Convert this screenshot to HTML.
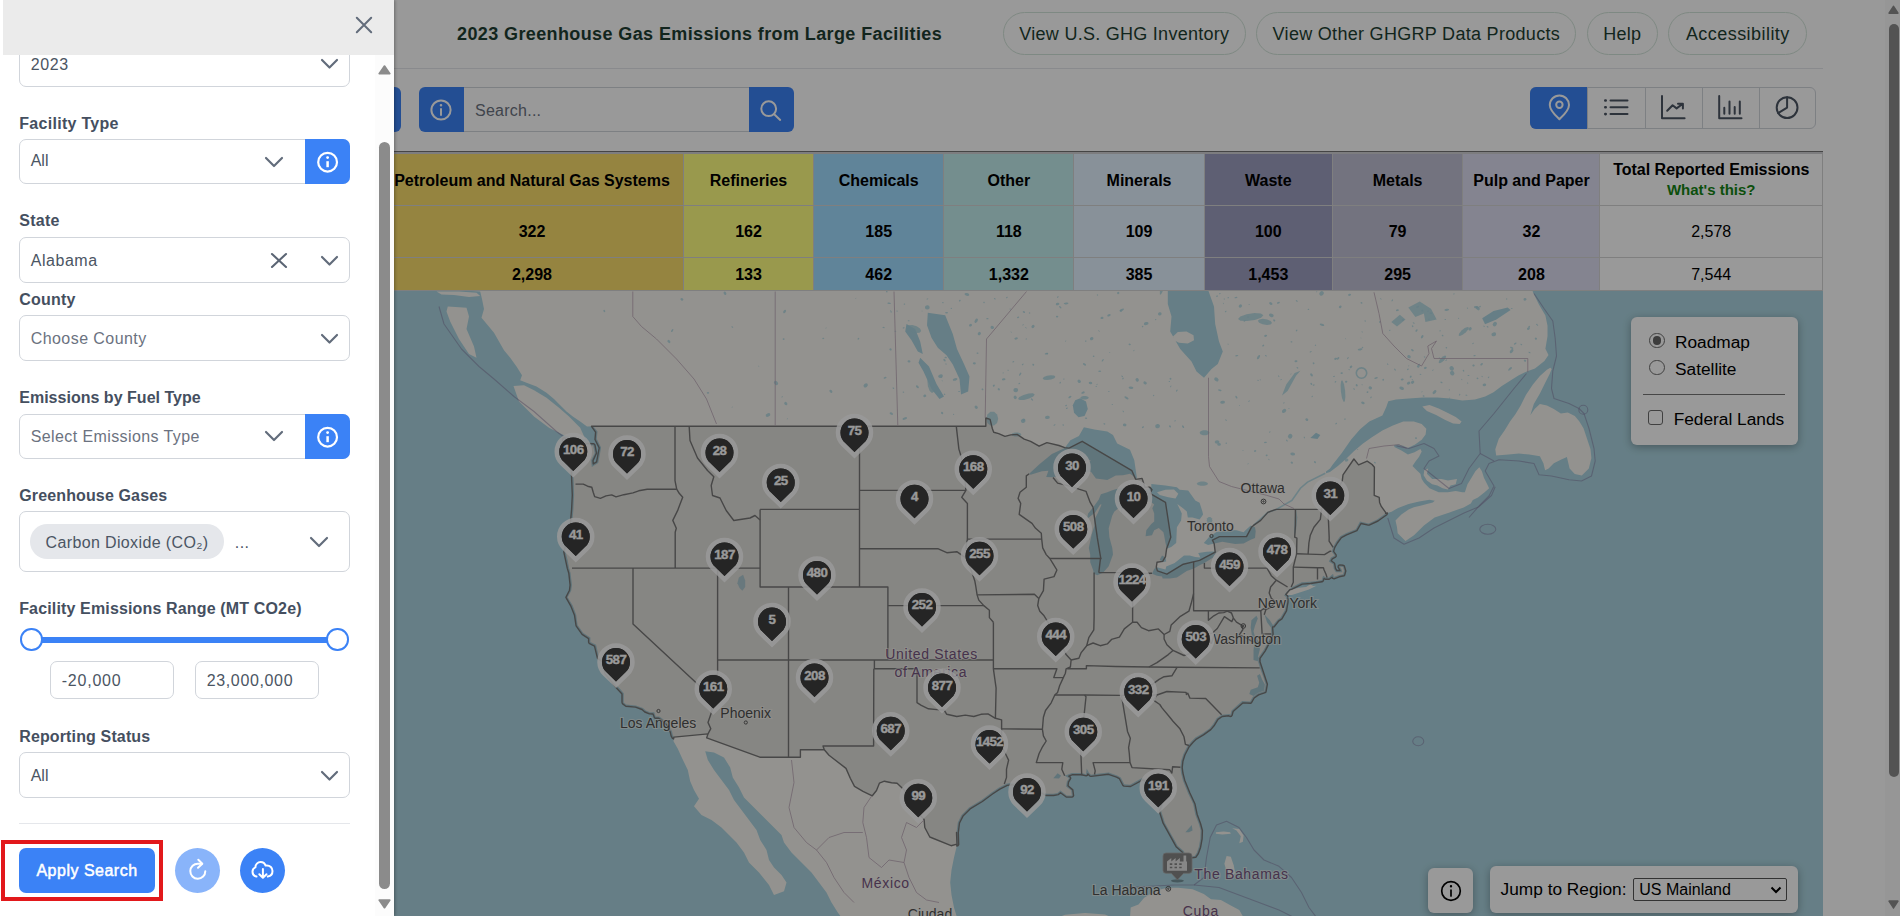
<!DOCTYPE html>
<html lang="en">
<head>
<meta charset="utf-8">
<title>2023 Greenhouse Gas Emissions from Large Facilities</title>
<style>
*{box-sizing:border-box;margin:0;padding:0}
html,body{width:1900px;height:916px;overflow:hidden;background:#fff;font-family:"Liberation Sans",Arial,sans-serif;}
.abs{position:absolute}
#page{position:absolute;left:0;top:0;width:1900px;height:916px;background:#fff;overflow:hidden}
#title{position:absolute;left:457px;top:22px;font-size:18px;font-weight:700;color:#1e3f32;letter-spacing:.39px;white-space:nowrap;line-height:24px}
.pill{position:absolute;top:12px;height:42.5px;border:1px solid #d3e4da;border-radius:22px;font-size:18px;color:#1e3f32;line-height:42.5px;text-align:center;white-space:nowrap;letter-spacing:.27px}
#hline{position:absolute;left:0;top:68px;width:1822.5px;height:1px;background:#e5e7eb}
.bluebtn{position:absolute;background:#3b82f6}
#search{position:absolute;left:464px;top:87px;width:285px;height:44.7px;border:1px solid #d1d5db;border-left:none;border-right:none;font-size:16px;color:#6b7280;line-height:46px;padding-left:11px;letter-spacing:.25px}
#views{position:absolute;left:1530px;top:87px;width:285.5px;height:41.7px;border:1px solid #d1d5db;border-radius:6px;overflow:hidden}
#views div{position:absolute;top:0;height:41.7px;border-left:1px solid #d1d5db}
table#sect{position:absolute;left:250px;top:152px;border-collapse:collapse;border-top:2px solid #d0d0d4;font-size:16px;font-weight:700;color:#000;text-align:center;table-layout:fixed}
#sect td{border:1px solid #d4d4d4;padding:2.6px 0 0 0;white-space:nowrap;vertical-align:middle}
#map{position:absolute;left:380px;top:290.5px;width:1442.5px;height:626px;overflow:hidden;background:#aad3df}
.ctl{position:absolute;background:#fff;border-radius:6px;box-shadow:0 2px 8px rgba(0,0,0,.3);font-size:17.3px;color:#000}
#overlay{position:absolute;left:0;top:0;width:1900px;height:916px;background:rgba(0,0,0,.4)}
#psb{position:absolute;left:1885px;top:0;width:15px;height:916px;background:#fafafa}
#panel{position:absolute;left:0;top:0;width:394px;height:916px;background:#fff;box-shadow:1px 0 3px rgba(0,0,0,.3);color:#4b5563;font-size:16px}
#phead{position:absolute;left:3px;top:0;width:391px;height:54.7px;background:#ebebeb}
.lbl{position:absolute;left:19.2px;font-weight:700;color:#454f5f;font-size:16px;line-height:20px;white-space:nowrap}
.box{position:absolute;left:19.2px;width:330.6px;border:1px solid #d1d5db;border-radius:7px;background:#fff}
.box span{position:absolute;left:10.5px;white-space:nowrap;line-height:20px}
.ibtn{position:absolute;left:305px;width:44.8px;background:#3b82f6;border-radius:0 7px 7px 0}
svg{position:absolute;overflow:visible}
</style>
</head>
<body>
<div id="page">
  <div id="title">2023 Greenhouse Gas Emissions from Large Facilities</div>
  <div class="pill" style="left:1003px;width:242.7px">View U.S. GHG Inventory</div>
  <div class="pill" style="left:1256.2px;width:320.3px;letter-spacing:.3px">View Other GHGRP Data Products</div>
  <div class="pill" style="left:1587px;width:70.5px">Help</div>
  <div class="pill" style="left:1668.2px;width:139.3px;letter-spacing:.45px">Accessibility</div>
  <div id="hline"></div>

  <div class="bluebtn" style="left:340px;top:87px;width:60.7px;height:44.7px;border-radius:6px"></div>
  <div class="bluebtn" style="left:419px;top:87px;width:45px;height:44.7px;border-radius:6px 0 0 6px"></div>
  <svg style="left:428.6px;top:98.3px" width="24" height="24" viewBox="0 0 24 24" fill="none" stroke="#fff" stroke-width="2" stroke-linecap="round"><circle cx="12" cy="12" r="9.6"/><path d="M12 11v6"/><circle cx="12" cy="7.3" r=".7" fill="#fff" stroke-width="1.2"/></svg>
  <div id="search">Search...</div>
  <div class="bluebtn" style="left:749px;top:87px;width:45px;height:44.7px;border-radius:0 6px 6px 0"></div>
  <svg style="left:757px;top:97px" width="26" height="26" viewBox="0 0 26 26" fill="none" stroke="#fff" stroke-width="2" stroke-linecap="round"><circle cx="11.7" cy="11.7" r="7.4"/><path d="M17.2 17.2l6 5.7"/></svg>

  <div id="views">
    <div style="left:56.4px;width:57.6px"></div>
    <div style="left:114px;width:57px"></div>
    <div style="left:171px;width:57px"></div>
    <div style="left:228px;width:57px"></div>
  </div>
  <div class="bluebtn" style="left:1530px;top:87px;width:57px;height:41.700px;border-radius:6px 0 0 6px"></div>
  <!-- view icons -->
  <svg style="left:1530px;top:87px" width="286" height="42" viewBox="1530 87 286 42" fill="none" stroke="#4b5563" stroke-width="2" stroke-linecap="round" stroke-linejoin="round">
    <path d="M1559.4 119.2c-3.4-3.2-9.6-8.6-9.6-14.2a9.6 9.6 0 0 1 19.2 0c0 5.6-6.2 11-9.6 14.200z" stroke="#fff"/><circle cx="1559.4" cy="104.8" r="3.2" stroke="#fff"/>
    <path d="M1610.5 100.5h17M1610.5 107.3h17M1610.5 114.100h17"/><path d="M1605.300 100.500h.4M1605.300 107.300h.4M1605.300 114.100h.4" stroke-width="2.600"/>
    <path d="M1662 96v22.300h22.600"/><path d="M1667.200 110.800l5.400-5.500 4 3.100 6.200-4.700M1678 103.700h4.900v4.700"/>
    <path d="M1719.200 96v22.300h22.300"/><path d="M1724.300 107.800v6M1729.500 101.500v12.300M1734.700 107v6.800M1739.800 101.500v12.300"/>
    <circle cx="1787.100" cy="107.600" r="10.400"/><path d="M1787.100 97.200v10.400l-9 5.500"/>
  </svg>

  <div class="abs" style="left:250px;top:151px;width:1572.5px;height:1px;background:#737373"></div>
  <table id="sect">
    <colgroup><col style="width:130px"><col style="width:303px"><col style="width:130px"><col style="width:130.4px"><col style="width:129.900px"><col style="width:130.5px"><col style="width:128px"><col style="width:130.700px"><col style="width:137px"><col style="width:222.5px"></colgroup>
    <tr style="height:52px"><td style="background:#f5a54a">Power Plants</td><td style="background:#f9dc6b">Petroleum and Natural Gas Systems</td><td style="background:#ffff80">Refineries</td><td style="background:#a0dcff">Chemicals</td><td style="background:#c1eded">Other</td><td style="background:#e3f2ff">Minerals</td><td style="background:#9d9ec0">Waste</td><td style="background:#c0c0d4">Metals</td><td style="background:#dcdcf0">Pulp and Paper</td><td style="line-height:19.5px;padding-top:1px">Total Reported Emissions<br><span style="color:#158415;font-size:15px">What's this?</span></td></tr>
    <tr style="height:52px"><td style="background:#f5a54a">55</td><td style="background:#f9dc6b">322</td><td style="background:#ffff80">162</td><td style="background:#a0dcff">185</td><td style="background:#c1eded">118</td><td style="background:#e3f2ff">109</td><td style="background:#9d9ec0">100</td><td style="background:#c0c0d4">79</td><td style="background:#dcdcf0">32</td><td style="font-weight:400">2,578</td></tr>
    <tr style="height:33px"><td style="background:#f5a54a">1,278</td><td style="background:#f9dc6b">2,298</td><td style="background:#ffff80">133</td><td style="background:#a0dcff">462</td><td style="background:#c1eded">1,332</td><td style="background:#e3f2ff">385</td><td style="background:#9d9ec0">1,453</td><td style="background:#c0c0d4">295</td><td style="background:#dcdcf0">208</td><td style="font-weight:400">7,544</td></tr>
  </table>

  <div id="map">
<svg style="left:0;top:0" width="1442.5" height="626" viewBox="380 290.5 1442.5 626" font-family="'Liberation Sans',Arial,sans-serif">
<rect x="380" y="290" width="1443" height="627" fill="#aad3df"/>
<path d="M480.2,291.0 482.0,298.5 484.0,308.5 481.5,317.2 487.8,324.8 494.0,332.2 499.0,341.0 504.0,349.8 510.2,357.2 516.5,366.0 522.0,374.8 520.2,379.8 526.5,382.2 536.5,386.0 546.5,392.2 554.0,398.5 560.2,404.8 566.5,411.0 572.8,416.0 580.2,421.0 587.0,426.0 593.2,425.8 597.5,431.1 596.8,438.6 601.1,447.1 599.6,455.6 598.2,462.5 591.8,466.5 591.1,459.8 594.7,452.4 593.2,445.0 582.3,444.4 571.0,441.4 564.3,439.1 565.3,449.3 569.5,460.8 573.1,470.2 573.8,483.2 574.1,494.8 573.4,508.9 572.4,520.9 571.2,532.7 567.7,544.5 565.6,551.4 567.7,559.9 569.1,567.6 570.5,572.3 572.0,584.6 571.2,590.2 567.7,596.8 572.7,605.1 576.2,614.3 577.6,624.4 583.3,632.6 590.4,637.1 590.4,641.6 596.1,644.3 597.5,650.6 598.9,656.8 604.6,660.4 607.5,663.0 605.3,667.4 606.7,672.7 613.1,680.6 617.4,685.8 620.9,689.3 623.8,692.8 623.8,701.9 626.3,704.0 635.9,704.9 643.0,707.4 645.8,710.0 650.0,711.7 654.3,711.7 655.7,716.0 659.3,716.0 662.8,718.5 668.5,723.6 672.1,731.2 672.8,734.6 673.9,736.6 673.5,740.8 677.8,748.2 682.0,757.5 687.8,769.5 690.2,780.8 694.0,789.5 699.0,798.2 694.0,805.8 701.5,814.5 711.5,819.5 721.5,827.0 729.0,834.5 736.5,842.0 744.0,852.0 749.0,862.0 759.0,872.0 769.0,884.5 774.0,894.5 784.0,890.8 786.5,882.0 781.5,874.5 774.0,867.0 769.0,859.5 766.5,849.5 760.2,839.5 756.5,829.5 749.0,819.5 741.5,809.5 734.0,799.5 729.0,789.5 721.5,779.5 714.0,769.5 707.8,759.5 705.2,750.8 714.0,752.0 724.0,757.0 730.2,767.0 732.8,777.0 739.0,787.0 744.0,797.0 754.0,807.0 764.0,817.0 774.0,827.0 781.5,834.5 784.0,842.0 791.5,852.0 801.5,862.0 811.5,872.0 819.0,882.0 826.5,892.0 831.5,902.0 837.8,912.0 841.5,917.0 957.0,917.0 954.0,907.0 951.5,894.5 950.2,882.0 951.5,869.5 954.0,857.0 957.0,844.5 956.5,832.0 957.8,822.0 961.5,814.5 969.0,807.0 981.5,799.5 991.5,792.0 999.0,787.0 1006.5,783.2 1004.3,783.5 1012.1,782.3 1022.1,785.1 1029.2,785.1 1032.7,781.8 1039.1,786.7 1042.0,790.8 1046.2,793.2 1053.3,793.2 1057.6,792.4 1060.4,790.0 1066.8,794.9 1071.8,794.9 1071.1,790.0 1066.1,785.9 1066.8,781.0 1069.0,777.8 1064.7,775.3 1071.8,772.5 1081.7,772.5 1086.0,773.7 1086.7,767.9 1088.8,772.0 1091.0,774.2 1097.3,773.2 1108.7,772.0 1117.2,775.0 1120.8,776.9 1124.3,783.8 1130.0,784.3 1138.5,779.4 1142.8,777.3 1149.2,781.0 1152.7,786.7 1157.7,792.4 1161.2,796.5 1163.4,804.6 1161.2,811.0 1163.4,817.4 1164.8,822.2 1169.1,830.1 1171.9,834.9 1175.5,841.2 1177.6,845.2 1184.0,850.7 1185.4,856.2 1188.2,856.2 1194.6,855.4 1196.8,852.2 1198.9,846.3 1200.3,838.1 1200.6,830.1 1198.9,823.8 1195.3,814.2 1193.2,803.7 1191.8,800.5 1188.2,793.2 1183.0,780.2 1181.1,772.8 1180.4,767.1 1181.1,760.5 1183.3,753.8 1187.5,745.5 1191.8,740.5 1195.3,737.1 1202.4,732.9 1209.5,727.9 1213.1,723.6 1216.6,717.7 1221.6,714.3 1229.4,713.4 1230.4,714.3 1231.5,710.0 1236.5,705.4 1242.2,700.6 1250.0,701.1 1252.8,696.2 1257.8,692.8 1264.5,690.5 1265.6,684.1 1263.5,677.1 1259.9,667.4 1258.2,661.6 1258.2,657.3 1263.5,649.7 1267.0,643.4 1270.6,636.2 1271.3,633.5 1270.9,627.1 1267.0,621.7 1264.9,615.3 1264.2,612.5 1265.6,615.3 1269.9,619.8 1273.0,624.8 1277.7,618.9 1280.5,617.1 1284.8,609.7 1286.2,601.4 1286.2,596.4 1284.1,594.9 1286.2,592.1 1290.5,587.4 1297.6,583.7 1301.8,581.8 1310.3,581.2 1316.7,580.5 1321.7,579.5 1323.1,575.2 1326.0,577.1 1328.8,577.1 1333.1,573.3 1333.8,576.5 1338.8,574.6 1343.0,573.8 1344.0,570.4 1343.0,566.6 1339.9,566.2 1341.9,569.5 1342.3,571.8 1335.9,571.8 1333.8,568.5 1333.1,563.7 1328.8,560.9 1330.9,557.0 1334.5,555.1 1331.7,551.2 1333.1,546.4 1335.9,541.5 1340.2,535.7 1345.8,532.7 1355.8,528.8 1360.0,520.9 1368.6,522.9 1377.1,518.9 1385.6,512.9 1391.6,511.3 1398.1,507.4 1408.6,503.5 1419.1,500.9 1429.5,499.3 1434.8,500.2 1432.8,501.9 1426.9,503.5 1420.4,505.2 1413.8,506.7 1408.6,509.0 1401.4,513.9 1395.5,520.0 1397.0,526.8 1397.7,532.7 1405.5,540.6 1414.0,534.7 1423.9,524.9 1434.6,516.9 1449.5,511.9 1463.7,506.9 1470.8,502.9 1472.8,499.5 1478.0,496.9 1484.6,491.7 1489.1,487.8 1487.2,483.8 1483.9,477.3 1481.9,470.7 1479.3,466.8 1475.4,470.7 1471.5,477.3 1467.5,483.8 1464.9,491.7 1462.3,491.7 1455.7,490.4 1447.9,491.7 1438.7,491.7 1429.5,487.8 1424.3,482.5 1421.7,478.6 1420.4,473.3 1416.4,469.4 1412.5,465.5 1415.1,461.6 1419.1,456.3 1421.7,451.1 1420.4,448.5 1414.5,451.7 1407.9,454.0 1401.4,450.0 1394.4,446.6 1394.2,444.5 1398.1,443.9 1403.3,445.2 1407.9,447.4 1415.1,443.9 1421.7,439.3 1425.6,434.1 1426.3,428.2 1421.7,423.6 1413.8,421.0 1403.3,421.0 1392.9,424.9 1382.4,430.1 1371.9,436.7 1362.7,443.2 1353.6,451.1 1347.0,457.6 1337.9,465.5 1330.0,471.4 1326.0,472.7 1326.0,471.0 1330.0,468.1 1332.6,464.2 1341.8,452.4 1351.0,439.3 1360.1,428.8 1369.3,421.0 1382.4,415.1 1386.3,406.5 1388.3,400.7 1396.0,399.0 1408.5,398.0 1423.0,396.9 1437.5,396.9 1450.0,398.0 1462.4,400.0 1474.9,399.0 1485.2,395.9 1493.5,391.7 1501.8,385.5 1510.1,380.3 1518.4,375.1 1526.7,371.0 1535.0,367.9 1544.4,360.6 1548.5,354.4 1545.4,348.2 1547.5,335.7 1547.5,325.3 1545.4,315.0 1539.2,304.6 1532.9,291.7 1531.9,285.9 380.0,285.0Z" fill="#f6f4ee"/>
<path d="M513.5,385.5 519.0,401.0 534.0,416.0 549.0,427.2 564.0,434.8 579.0,439.0 585.2,438.5 580.2,427.2 569.0,416.0 559.0,407.2 546.5,397.2 534.0,389.8 524.0,384.8Z" fill="#f6f4ee"/>
<path d="M447.8,306.0 466.5,307.2 469.0,316.0 466.5,328.5 474.0,346.0 476.5,357.2 469.0,353.5 459.0,338.5 450.2,321.0 446.5,311.0Z" fill="#f6f4ee"/>
<path d="M436.5,291.0 459.0,291.0 476.5,292.2 480.2,295.5 469.0,296.5 454.0,294.5 441.5,294.0Z" fill="#f6f4ee"/>
<path d="M1550.3,367.2 1546.9,369.3 1539.9,375.4 1532.9,384.1 1525.9,394.6 1520.7,405.1 1515.4,413.8 1510.2,420.8 1504.9,429.6 1498.8,438.3 1495.3,448.8 1496.2,454.9 1508.4,454.0 1518.9,453.1 1529.4,454.0 1539.9,455.8 1543.4,462.8 1545.1,469.7 1548.6,468.0 1553.8,462.8 1560.8,459.3 1566.9,456.6 1569.6,468.0 1574.8,473.6 1581.8,475.0 1588.8,468.0 1591.4,457.5 1590.5,448.8 1587.0,438.3 1583.5,427.8 1579.2,420.8 1574.8,415.6 1567.8,412.1 1560.8,413.0 1553.8,408.6 1546.9,405.1 1539.9,403.4 1534.6,408.6 1530.3,414.7 1533.8,403.4 1539.9,392.9 1545.1,382.4 1549.5,373.7 1551.7,368.4Z" fill="#f6f4ee"/>
<path d="M1422.3,405.9 1429.5,404.6 1438.7,407.9 1447.9,412.4 1455.7,416.4 1461.6,421.0 1459.7,423.6 1453.1,422.9 1445.3,419.6 1436.1,414.4 1426.9,410.5Z" fill="#f6f4ee"/>
<path d="M1424.3,469.4 1428.2,468.1 1426.9,473.3 1432.2,478.6 1441.3,478.6 1447.9,479.9 1457.0,478.6 1455.7,483.8 1450.5,485.1 1447.9,489.1 1442.6,487.8 1437.4,485.1 1432.2,483.8 1426.9,479.9 1423.6,474.7Z" fill="#f6f4ee"/>
<path d="M1285.8,594.0 1289.8,589.3 1299.0,587.2 1306.1,586.5 1310.3,583.7 1313.2,585.6 1316.5,585.2 1308.9,588.9 1300.4,591.7 1291.9,594.4 1286.2,594.5Z" fill="#f6f4ee"/>
<path d="M1130.7,906.9 1138.5,904.1 1144.2,897.2 1155.6,890.3 1166.9,887.2 1178.3,887.2 1192.5,888.8 1203.8,893.4 1211.0,898.7 1220.9,899.5 1230.8,904.9 1239.3,909.5 1243.6,917.1 1130.0,917.1Z" fill="#f6f4ee"/>
<path d="M1215.9,831.7 1223.7,830.9 1230.1,831.7 1230.8,833.3 1222.3,834.1 1215.9,833.3Z" fill="#f6f4ee"/>
<path d="M1232.2,827.8 1239.3,828.6 1243.6,834.9 1242.9,841.2 1239.3,842.8 1240.8,835.7 1236.5,830.1Z" fill="#f6f4ee"/>
<path d="M1226.6,855.4 1230.8,856.2 1233.7,864.7 1235.1,872.5 1231.5,877.2 1226.6,871.0 1224.4,863.2Z" fill="#f6f4ee"/>
<g fill="#aad3df">
<path d="M1167.8,288.5 1207.8,288.5 1214.0,306.0 1215.2,323.5 1219.0,341.0 1222.8,351.0 1217.8,363.5 1211.5,368.5 1204.0,377.2 1196.5,371.0 1191.5,361.0 1180.2,348.5 1175.2,339.8 1170.2,331.0 1171.5,316.0 1167.8,303.5Z"/>
<path d="M927.8,312.2 945.2,314.8 952.8,333.5 957.0,348.5 964.0,363.5 969.5,376.0 968.2,391.0 961.0,394.0 959.5,378.5 952.8,364.0 946.5,354.8 937.8,347.2 931.5,337.2 927.0,324.8Z"/>
<path d="M906.5,323.5 915.2,328.5 920.2,341.0 922.8,353.5 917.8,351.0 911.5,339.8 905.2,331.0Z"/>
<path d="M920.2,357.2 929.0,366.0 936.5,383.5 944.0,396.0 939.5,398.5 931.5,388.5 923.5,371.0 918.5,362.2Z"/>
<path d="M1080.2,397.8 1086.0,401.0 1087.8,408.5 1084.5,415.5 1078.5,416.8 1074.0,412.2 1072.8,404.8 1075.2,399.8Z"/>
<path d="M1029.2,473.3 1039.1,464.0 1051.9,453.5 1064.7,447.6 1070.4,439.7 1078.9,435.4 1083.9,426.8 1094.5,429.0 1107.3,431.1 1113.0,434.4 1117.2,442.9 1130.0,449.3 1134.3,459.8 1135.7,469.2 1137.1,478.5 1130.0,473.3 1122.9,474.8 1115.8,475.0 1107.3,479.5 1095.9,478.1 1091.0,471.2 1081.0,472.9 1084.6,465.0 1091.0,459.4 1083.2,460.8 1074.6,468.1 1069.0,471.2 1059.0,475.4 1052.6,476.8 1046.2,476.4 1048.4,470.2 1042.0,470.8 1030.6,474.3Z"/>
<path d="M1133.6,492.8 1128.6,496.8 1130.0,501.9 1124.3,502.9 1122.2,508.9 1121.5,513.3 1120.8,505.9 1114.4,510.9 1112.3,514.9 1108.7,527.8 1109.4,536.7 1112.3,547.4 1113.0,554.1 1108.7,565.7 1103.0,572.3 1097.3,574.8 1093.8,573.3 1093.1,569.5 1090.2,561.8 1090.2,554.1 1088.8,547.4 1091.7,533.7 1094.5,524.9 1094.5,518.9 1098.1,511.9 1101.6,503.9 1100.2,503.9 1095.2,511.9 1088.8,516.9 1087.1,517.9 1088.1,512.9 1093.1,506.9 1098.8,498.9 1100.9,493.8 1107.3,491.8 1112.3,489.7 1121.5,487.1 1130.0,489.1 1134.0,491.4Z"/>
<path d="M1134.3,492.4 1137.1,488.7 1145.6,489.3 1151.3,487.1 1151.3,483.6 1165.5,485.0 1176.9,486.7 1179.7,489.3 1188.2,490.1 1195.3,499.9 1199.6,502.3 1202.4,510.9 1203.1,513.9 1199.6,518.9 1192.5,516.9 1187.8,516.9 1186.8,510.9 1183.3,507.9 1177.3,503.5 1181.8,512.9 1181.1,519.9 1176.9,526.8 1176.6,533.7 1176.2,542.5 1171.2,546.4 1166.9,548.3 1165.5,542.5 1164.1,534.7 1163.4,531.8 1158.8,527.4 1154.2,529.8 1152.0,534.7 1145.6,535.7 1146.3,529.8 1151.3,523.5 1154.2,520.9 1154.2,512.9 1152.3,507.7 1154.2,503.9 1151.6,501.9 1146.8,500.5 1140.0,495.8 1137.1,495.4Z"/>
<path d="M1152.0,573.3 1154.2,568.5 1156.3,566.6 1159.8,567.6 1165.5,569.1 1166.2,566.0 1174.7,562.4 1184.0,555.1 1189.7,555.1 1195.3,556.6 1200.3,557.0 1198.2,552.6 1206.7,551.2 1211.7,550.9 1216.6,550.9 1213.1,557.0 1204.4,562.4 1199.6,564.7 1193.9,567.9 1186.8,570.4 1176.9,577.1 1169.8,578.0 1162.7,578.0 1162.0,576.1 1157.0,575.2Z"/>
<path d="M1203.8,542.5 1209.5,536.1 1216.6,531.4 1229.4,529.4 1236.5,529.8 1243.6,531.8 1245.5,529.8 1250.7,524.9 1255.0,526.8 1255.7,530.8 1255.0,537.6 1250.7,539.2 1243.6,542.9 1235.1,543.5 1222.3,541.2 1214.5,543.1 1208.1,544.5Z"/>
<path d="M1159.8,559.0 1162.0,555.1 1165.5,557.0 1166.2,560.9 1162.0,561.8Z"/>
<path d="M1257.8,660.7 1253.5,659.5 1253.5,649.7 1254.3,643.4 1252.8,640.7 1252.1,636.2 1250.7,627.1 1251.4,619.8 1256.4,615.3 1257.8,618.0 1255.0,625.3 1253.5,630.8 1255.0,636.2 1259.2,641.6 1259.9,648.8 1258.1,655.9 1258.2,658.6Z"/>
<path d="M1264.2,690.2 1264.9,684.1 1262.1,678.9 1259.9,673.6 1257.1,675.3 1259.2,682.3 1257.8,686.7 1250.7,689.3 1249.3,693.6 1253.5,695.4 1257.8,692.4Z"/>
<path d="M1310.3,437.6 1316.0,432.2 1320.3,434.4 1317.5,438.6Z"/>
<path d="M1482.2,317.8 1493.5,310.6 1507.7,306.9 1510.6,309.4 1496.4,319.0 1485.0,323.8Z"/>
<path d="M1053.3,777.8 1057.6,772.8 1061.1,775.3 1059.0,778.1Z"/>
<path d="M1185.4,831.7 1191.8,824.6 1192.5,830.1 1188.9,831.7Z"/>
</g>
<g fill="#aad3df" fill-opacity=".8">
<path d="M998.2,418.2 997.1,413.9 994.1,411.3 990.4,411.3 987.4,413.9 986.3,418.2 987.4,422.4 990.4,425.0 994.1,425.0 997.1,422.4Z"/>
<path d="M1034.7,393.9 1033.0,392.8 1028.7,393.0 1023.5,394.4 1019.4,396.5 1018.0,398.5 1019.7,399.6 1024.0,399.4 1029.2,398.0 1033.3,395.9Z"/>
<path d="M1021.4,433.9 1020.4,432.7 1017.9,431.9 1014.9,431.9 1012.4,432.7 1011.4,433.9 1012.4,435.2 1014.9,436.0 1017.9,436.0 1020.4,435.2Z"/>
<path d="M1209.5,432.2 1208.6,430.7 1206.1,429.8 1203.0,429.8 1200.5,430.7 1199.6,432.2 1200.5,433.7 1203.0,434.7 1206.1,434.7 1208.6,433.7Z"/>
<path d="M1208.1,483.2 1207.0,481.9 1204.2,481.0 1200.7,481.0 1197.8,481.9 1196.7,483.2 1197.8,484.5 1200.7,485.3 1204.2,485.3 1207.0,484.5Z"/>
<path d="M1212.4,519.9 1211.8,517.8 1210.4,516.5 1208.7,516.5 1207.2,517.8 1206.7,519.9 1207.2,522.0 1208.7,523.3 1210.4,523.3 1211.8,522.0Z"/>
<path d="M1282.0,395.1 1287.6,390.6 1296.2,374.9 1300.4,370.3 1294.7,372.6 1286.2,383.9Z"/>
<path d="M1408.3,306.9 1419.7,300.9 1431.0,308.2 1436.7,319.0 1425.4,321.4 1423.9,313.0 1415.4,316.6Z"/>
<path d="M1391.3,321.4 1399.8,314.2 1405.5,319.0 1397.0,326.1Z"/>
<path d="M921.2,330.6 920.0,328.1 916.7,325.8 912.4,324.5 908.7,324.8 907.2,326.5 908.3,328.9 911.7,331.2 916.0,332.5 919.6,332.2Z"/>
<path d="M1294.4,536.7 1296.2,528.8 1297.3,516.9 1296.2,508.9 1294.7,516.9 1294.0,528.8Z"/>
<path d="M934.5,382.0 932.8,377.4 930.4,375.2 928.3,376.4 927.4,380.5 927.9,385.8 929.7,390.4 932.0,392.5 934.1,391.3 935.1,387.3Z"/>
<path d="M1263.4,314.7 1260.9,313.0 1254.5,312.6 1246.6,313.8 1240.3,316.0 1238.0,318.5 1240.5,320.2 1247.0,320.6 1254.8,319.4 1261.1,317.2Z"/>
<path d="M1272.0,322.4 1270.7,320.5 1267.2,319.0 1262.9,318.3 1259.3,318.9 1257.8,320.3 1259.1,322.2 1262.6,323.8 1267.0,324.4 1270.5,323.9Z"/>
<path d="M1345.1,390.0 1344.0,383.7 1342.5,379.9 1341.2,380.3 1340.6,384.6 1340.9,391.2 1342.0,397.5 1343.5,401.2 1344.8,400.9 1345.4,396.6Z"/>
<path d="M1088.8,397.3 1088.0,396.3 1085.9,395.6 1083.3,395.6 1081.1,396.3 1080.3,397.3 1081.1,398.3 1083.3,399.0 1085.9,399.0 1088.0,398.3Z"/>
<path d="M1055.4,376.3 1054.1,375.1 1050.9,374.7 1047.0,375.3 1043.8,376.5 1042.7,378.0 1044.0,379.2 1047.2,379.6 1051.2,379.0 1054.3,377.7Z"/>
<path d="M1446.1,355.4 1445.0,354.9 1442.9,355.9 1440.6,358.1 1439.0,360.5 1438.7,362.3 1439.8,362.8 1441.9,361.8 1444.2,359.7 1445.8,357.3Z"/>
<path d="M1468.9,326.9 1467.5,326.4 1464.7,327.6 1461.5,330.1 1459.2,332.9 1458.6,334.9 1459.9,335.4 1462.7,334.2 1465.9,331.7 1468.2,328.9Z"/>
<path d="M743.1,574.2 745.2,579.9 745.2,586.5 742.4,590.2 739.5,587.4 737.4,582.7 738.8,577.1Z"/>
<ellipse cx="922.1" cy="310.5" rx="0.7" ry="0.31" transform="rotate(4 922.1 310.5)"/>
<ellipse cx="927.5" cy="298.5" rx="1" ry="0.42" transform="rotate(-8 927.5 298.5)"/>
<ellipse cx="889.1" cy="302.7" rx="1.8" ry="0.77" transform="rotate(8 889.1 302.7)"/>
<ellipse cx="1003.2" cy="372.4" rx="0.7" ry="0.48" transform="rotate(-12 1003.2 372.4)"/>
<ellipse cx="1006.9" cy="297.0" rx="1" ry="0.54" transform="rotate(-43 1006.9 297.0)"/>
<ellipse cx="895.3" cy="330.8" rx="1" ry="0.45" transform="rotate(9 895.3 330.8)"/>
<ellipse cx="904.4" cy="303.6" rx="0.8" ry="0.55" transform="rotate(14 904.4 303.6)"/>
<ellipse cx="944.5" cy="359.6" rx="1.5" ry="0.95" transform="rotate(51 944.5 359.6)"/>
<ellipse cx="903.4" cy="391.6" rx="0.8" ry="0.55" transform="rotate(3 903.4 391.6)"/>
<ellipse cx="993.8" cy="385.1" rx="1.2" ry="0.85" transform="rotate(-51 993.8 385.1)"/>
<ellipse cx="946.6" cy="312.3" rx="1.5" ry="0.71" transform="rotate(-1 946.6 312.3)"/>
<ellipse cx="885.1" cy="377.2" rx="1.5" ry="0.86" transform="rotate(-18 885.1 377.2)"/>
<ellipse cx="944.6" cy="393.8" rx="0.8" ry="0.66" transform="rotate(53 944.6 393.8)"/>
<ellipse cx="941.6" cy="376.7" rx="0.7" ry="0.54" transform="rotate(-23 941.6 376.7)"/>
<ellipse cx="955.1" cy="378.9" rx="2.4" ry="1.30" transform="rotate(-14 955.1 378.9)"/>
<ellipse cx="966.9" cy="293.9" rx="2.4" ry="1.39" transform="rotate(13 966.9 293.9)"/>
<ellipse cx="917.4" cy="386.2" rx="1.8" ry="1.07" transform="rotate(45 917.4 386.2)"/>
<ellipse cx="890.5" cy="348.9" rx="1.2" ry="1.01" transform="rotate(38 890.5 348.9)"/>
<ellipse cx="992.3" cy="326.9" rx="1.8" ry="1.61" transform="rotate(22 992.3 326.9)"/>
<ellipse cx="890.8" cy="310.5" rx="1" ry="0.41" transform="rotate(40 890.8 310.5)"/>
<ellipse cx="903.7" cy="327.4" rx="1" ry="0.61" transform="rotate(-16 903.7 327.4)"/>
<ellipse cx="953.6" cy="413.9" rx="0.7" ry="0.44" transform="rotate(45 953.6 413.9)"/>
<ellipse cx="1003.7" cy="378.8" rx="1.8" ry="1.08" transform="rotate(-13 1003.7 378.8)"/>
<ellipse cx="904.8" cy="418.0" rx="2.4" ry="1.15" transform="rotate(-19 904.8 418.0)"/>
<ellipse cx="886.8" cy="291.0" rx="1" ry="0.67" transform="rotate(54 886.8 291.0)"/>
<ellipse cx="959.8" cy="300.1" rx="1" ry="0.71" transform="rotate(-42 959.8 300.1)"/>
<ellipse cx="927.3" cy="306.8" rx="2.4" ry="2.15" transform="rotate(-4 927.3 306.8)"/>
<ellipse cx="942.9" cy="302.1" rx="0.8" ry="0.62" transform="rotate(29 942.9 302.1)"/>
<ellipse cx="942.2" cy="380.3" rx="0.7" ry="0.35" transform="rotate(54 942.2 380.3)"/>
<ellipse cx="998.8" cy="388.8" rx="1.2" ry="1.07" transform="rotate(44 998.8 388.8)"/>
<ellipse cx="970.5" cy="324.7" rx="1.5" ry="1.28" transform="rotate(-17 970.5 324.7)"/>
<ellipse cx="909.0" cy="360.9" rx="1.5" ry="1.08" transform="rotate(14 909.0 360.9)"/>
<ellipse cx="982.5" cy="388.8" rx="1" ry="0.80" transform="rotate(38 982.5 388.8)"/>
<ellipse cx="976.2" cy="320.2" rx="2.4" ry="1.39" transform="rotate(-57 976.2 320.2)"/>
<ellipse cx="883.6" cy="327.0" rx="1.2" ry="0.60" transform="rotate(13 883.6 327.0)"/>
<ellipse cx="924.8" cy="395.3" rx="1.5" ry="1.32" transform="rotate(-16 924.8 395.3)"/>
<ellipse cx="908.7" cy="320.3" rx="1" ry="0.57" transform="rotate(-2 908.7 320.3)"/>
<ellipse cx="1008.1" cy="369.7" rx="0.7" ry="0.45" transform="rotate(18 1008.1 369.7)"/>
<ellipse cx="984.0" cy="301.9" rx="0.8" ry="0.68" transform="rotate(34 984.0 301.9)"/>
<ellipse cx="977.5" cy="352.7" rx="1" ry="0.62" transform="rotate(16 977.5 352.7)"/>
<ellipse cx="891.3" cy="413.1" rx="1.8" ry="1.14" transform="rotate(29 891.3 413.1)"/>
<ellipse cx="891.0" cy="311.5" rx="1" ry="0.41" transform="rotate(11 891.0 311.5)"/>
<ellipse cx="940.5" cy="375.6" rx="2.4" ry="1.75" transform="rotate(-18 940.5 375.6)"/>
<ellipse cx="951.3" cy="307.9" rx="0.7" ry="0.56" transform="rotate(27 951.3 307.9)"/>
<ellipse cx="893.4" cy="387.7" rx="1" ry="0.62" transform="rotate(45 893.4 387.7)"/>
<ellipse cx="987.4" cy="318.2" rx="1.2" ry="0.61" transform="rotate(0 987.4 318.2)"/>
<ellipse cx="979.3" cy="333.1" rx="1.8" ry="1.47" transform="rotate(-53 979.3 333.1)"/>
<ellipse cx="976.2" cy="406.8" rx="1.8" ry="1.46" transform="rotate(45 976.2 406.8)"/>
<ellipse cx="897.0" cy="310.6" rx="0.7" ry="0.59" transform="rotate(33 897.0 310.6)"/>
<ellipse cx="959.1" cy="391.1" rx="1" ry="0.49" transform="rotate(-3 959.1 391.1)"/>
<ellipse cx="974.3" cy="362.8" rx="1.5" ry="1.11" transform="rotate(4 974.3 362.8)"/>
<ellipse cx="994.8" cy="298.3" rx="1" ry="0.54" transform="rotate(33 994.8 298.3)"/>
<ellipse cx="946.0" cy="363.5" rx="0.8" ry="0.50" transform="rotate(14 946.0 363.5)"/>
<ellipse cx="945.7" cy="357.1" rx="1.2" ry="0.75" transform="rotate(4 945.7 357.1)"/>
<ellipse cx="942.1" cy="412.5" rx="1.2" ry="1.03" transform="rotate(47 942.1 412.5)"/>
<ellipse cx="1046.5" cy="353.2" rx="1.8" ry="0.83" transform="rotate(-7 1046.5 353.2)"/>
<ellipse cx="1023.1" cy="324.4" rx="0.8" ry="0.41" transform="rotate(-24 1023.1 324.4)"/>
<ellipse cx="1032.0" cy="399.0" rx="1.5" ry="0.71" transform="rotate(46 1032.0 399.0)"/>
<ellipse cx="1159.8" cy="313.4" rx="1.8" ry="1.61" transform="rotate(-12 1159.8 313.4)"/>
<ellipse cx="1085.8" cy="340.6" rx="0.8" ry="0.61" transform="rotate(-58 1085.8 340.6)"/>
<ellipse cx="1109.7" cy="352.2" rx="0.7" ry="0.41" transform="rotate(2 1109.7 352.2)"/>
<ellipse cx="1063.2" cy="424.5" rx="0.8" ry="0.71" transform="rotate(35 1063.2 424.5)"/>
<ellipse cx="1057.8" cy="296.5" rx="1" ry="0.54" transform="rotate(-44 1057.8 296.5)"/>
<ellipse cx="1086.0" cy="417.7" rx="1.2" ry="0.72" transform="rotate(4 1086.0 417.7)"/>
<ellipse cx="1102.7" cy="359.8" rx="1.5" ry="0.67" transform="rotate(-53 1102.7 359.8)"/>
<ellipse cx="1133.9" cy="350.1" rx="0.8" ry="0.43" transform="rotate(-58 1133.9 350.1)"/>
<ellipse cx="1025.9" cy="327.2" rx="1" ry="0.43" transform="rotate(44 1025.9 327.2)"/>
<ellipse cx="1091.7" cy="338.1" rx="1.8" ry="1.55" transform="rotate(-28 1091.7 338.1)"/>
<ellipse cx="1033.3" cy="364.2" rx="1" ry="0.87" transform="rotate(56 1033.3 364.2)"/>
<ellipse cx="1057.1" cy="316.2" rx="1.2" ry="0.86" transform="rotate(4 1057.1 316.2)"/>
<ellipse cx="1047.1" cy="353.0" rx="1" ry="0.54" transform="rotate(36 1047.1 353.0)"/>
<ellipse cx="1013.3" cy="361.3" rx="1" ry="0.66" transform="rotate(-31 1013.3 361.3)"/>
<ellipse cx="1090.5" cy="382.5" rx="1.8" ry="1.31" transform="rotate(6 1090.5 382.5)"/>
<ellipse cx="1170.0" cy="425.9" rx="1.2" ry="0.89" transform="rotate(58 1170.0 425.9)"/>
<ellipse cx="1137.2" cy="379.4" rx="1.8" ry="1.61" transform="rotate(58 1137.2 379.4)"/>
<ellipse cx="1160.7" cy="293.0" rx="1.2" ry="0.74" transform="rotate(-53 1160.7 293.0)"/>
<ellipse cx="1129.7" cy="343.9" rx="1.2" ry="0.84" transform="rotate(23 1129.7 343.9)"/>
<ellipse cx="1018.1" cy="316.8" rx="1.2" ry="0.75" transform="rotate(-28 1018.1 316.8)"/>
<ellipse cx="1183.1" cy="426.2" rx="1.5" ry="0.78" transform="rotate(56 1183.1 426.2)"/>
<ellipse cx="1065.7" cy="340.6" rx="0.7" ry="0.40" transform="rotate(-50 1065.7 340.6)"/>
<ellipse cx="1060.2" cy="382.2" rx="1" ry="0.65" transform="rotate(-59 1060.2 382.2)"/>
<ellipse cx="1057.6" cy="303.5" rx="1.8" ry="1.25" transform="rotate(-13 1057.6 303.5)"/>
<ellipse cx="1063.9" cy="378.5" rx="0.8" ry="0.55" transform="rotate(4 1063.9 378.5)"/>
<ellipse cx="1145.1" cy="382.4" rx="1.8" ry="1.41" transform="rotate(26 1145.1 382.4)"/>
<ellipse cx="1099.0" cy="330.5" rx="1" ry="0.42" transform="rotate(40 1099.0 330.5)"/>
<ellipse cx="1170.5" cy="378.2" rx="1" ry="0.85" transform="rotate(30 1170.5 378.2)"/>
<ellipse cx="1112.3" cy="404.0" rx="0.7" ry="0.57" transform="rotate(10 1112.3 404.0)"/>
<ellipse cx="1170.7" cy="385.9" rx="1" ry="0.44" transform="rotate(-55 1170.7 385.9)"/>
<ellipse cx="1124.7" cy="424.4" rx="1.8" ry="1.47" transform="rotate(7 1124.7 424.4)"/>
<ellipse cx="1123.0" cy="378.0" rx="1" ry="0.64" transform="rotate(-60 1123.0 378.0)"/>
<ellipse cx="1153.6" cy="395.0" rx="0.8" ry="0.58" transform="rotate(-52 1153.6 395.0)"/>
<ellipse cx="1142.6" cy="326.1" rx="0.8" ry="0.66" transform="rotate(-32 1142.6 326.1)"/>
<ellipse cx="1146.2" cy="323.1" rx="2.4" ry="1.55" transform="rotate(-14 1146.2 323.1)"/>
<ellipse cx="1096.2" cy="386.0" rx="0.7" ry="0.50" transform="rotate(17 1096.2 386.0)"/>
<ellipse cx="1023.9" cy="311.5" rx="1.2" ry="0.87" transform="rotate(23 1023.9 311.5)"/>
<ellipse cx="1121.8" cy="309.5" rx="2.4" ry="1.03" transform="rotate(-28 1121.8 309.5)"/>
<ellipse cx="1131.0" cy="387.2" rx="2.4" ry="1.31" transform="rotate(2 1131.0 387.2)"/>
<ellipse cx="1093.6" cy="355.8" rx="0.8" ry="0.72" transform="rotate(6 1093.6 355.8)"/>
<ellipse cx="1066.1" cy="302.9" rx="2.4" ry="0.98" transform="rotate(-5 1066.1 302.9)"/>
<ellipse cx="1157.6" cy="425.6" rx="2.4" ry="2.15" transform="rotate(-14 1157.6 425.6)"/>
<ellipse cx="1175.0" cy="420.3" rx="0.8" ry="0.55" transform="rotate(-43 1175.0 420.3)"/>
<ellipse cx="1104.3" cy="423.4" rx="1" ry="0.70" transform="rotate(16 1104.3 423.4)"/>
<ellipse cx="1060.3" cy="306.7" rx="1.5" ry="0.77" transform="rotate(48 1060.3 306.7)"/>
<ellipse cx="1097.5" cy="294.5" rx="0.7" ry="0.61" transform="rotate(22 1097.5 294.5)"/>
<ellipse cx="1083.0" cy="392.1" rx="1.8" ry="1.03" transform="rotate(-22 1083.0 392.1)"/>
<ellipse cx="1161.2" cy="291.2" rx="1.5" ry="1.23" transform="rotate(-46 1161.2 291.2)"/>
<ellipse cx="1176.8" cy="390.1" rx="1.2" ry="0.63" transform="rotate(-52 1176.8 390.1)"/>
<ellipse cx="1023.8" cy="419.6" rx="1.2" ry="0.99" transform="rotate(-26 1023.8 419.6)"/>
<ellipse cx="1019.3" cy="383.0" rx="1" ry="0.52" transform="rotate(-28 1019.3 383.0)"/>
<ellipse cx="1102.0" cy="317.4" rx="1.5" ry="1.19" transform="rotate(-9 1102.0 317.4)"/>
<ellipse cx="1015.2" cy="396.9" rx="1.8" ry="1.54" transform="rotate(53 1015.2 396.9)"/>
<ellipse cx="1108.9" cy="391.0" rx="0.7" ry="0.61" transform="rotate(-11 1108.9 391.0)"/>
<ellipse cx="1120.7" cy="310.3" rx="1.2" ry="0.77" transform="rotate(49 1120.7 310.3)"/>
<ellipse cx="1109.0" cy="314.7" rx="1.8" ry="1.03" transform="rotate(-24 1109.0 314.7)"/>
<ellipse cx="1143.0" cy="426.7" rx="1.2" ry="0.72" transform="rotate(-31 1143.0 426.7)"/>
<ellipse cx="1097.0" cy="384.0" rx="0.8" ry="0.39" transform="rotate(-41 1097.0 384.0)"/>
<ellipse cx="1047.4" cy="416.9" rx="2.4" ry="1.62" transform="rotate(-6 1047.4 416.9)"/>
<ellipse cx="1069.9" cy="396.5" rx="1.8" ry="0.85" transform="rotate(-37 1069.9 396.5)"/>
<ellipse cx="1026.3" cy="338.5" rx="0.8" ry="0.45" transform="rotate(-16 1026.3 338.5)"/>
<ellipse cx="1155.7" cy="319.1" rx="0.7" ry="0.54" transform="rotate(-10 1155.7 319.1)"/>
<ellipse cx="1084.5" cy="363.9" rx="1.8" ry="0.96" transform="rotate(30 1084.5 363.9)"/>
<ellipse cx="1099.7" cy="370.8" rx="1.5" ry="0.69" transform="rotate(0 1099.7 370.8)"/>
<ellipse cx="1123.3" cy="410.9" rx="1" ry="0.45" transform="rotate(48 1123.3 410.9)"/>
<ellipse cx="1079.2" cy="380.8" rx="1.8" ry="1.58" transform="rotate(42 1079.2 380.8)"/>
<ellipse cx="1015.8" cy="389.6" rx="2.4" ry="2.12" transform="rotate(-1 1015.8 389.6)"/>
<ellipse cx="1023.2" cy="420.3" rx="2.4" ry="2.13" transform="rotate(-30 1023.2 420.3)"/>
<ellipse cx="1029.6" cy="312.5" rx="0.8" ry="0.70" transform="rotate(27 1029.6 312.5)"/>
<ellipse cx="1126.5" cy="397.3" rx="2.4" ry="1.06" transform="rotate(33 1126.5 397.3)"/>
<ellipse cx="1010.2" cy="308.5" rx="0.7" ry="0.51" transform="rotate(-24 1010.2 308.5)"/>
<ellipse cx="1033.0" cy="326.0" rx="1.8" ry="1.35" transform="rotate(-47 1033.0 326.0)"/>
<ellipse cx="1022.7" cy="363.9" rx="1" ry="0.59" transform="rotate(-33 1022.7 363.9)"/>
<ellipse cx="1118.2" cy="292.5" rx="1.2" ry="1.08" transform="rotate(-27 1118.2 292.5)"/>
<ellipse cx="1066.9" cy="407.7" rx="1" ry="0.64" transform="rotate(-32 1066.9 407.7)"/>
<ellipse cx="1054.5" cy="424.5" rx="1.2" ry="0.51" transform="rotate(-37 1054.5 424.5)"/>
<ellipse cx="1169.3" cy="381.0" rx="0.8" ry="0.42" transform="rotate(20 1169.3 381.0)"/>
<ellipse cx="1016.1" cy="338.0" rx="1.8" ry="1.05" transform="rotate(-12 1016.1 338.0)"/>
<ellipse cx="1011.2" cy="331.6" rx="0.8" ry="0.40" transform="rotate(56 1011.2 331.6)"/>
<ellipse cx="1066.1" cy="405.0" rx="1" ry="0.63" transform="rotate(-28 1066.1 405.0)"/>
<ellipse cx="1122.2" cy="375.8" rx="1" ry="0.64" transform="rotate(49 1122.2 375.8)"/>
<ellipse cx="1020.2" cy="373.7" rx="1.8" ry="0.77" transform="rotate(-57 1020.2 373.7)"/>
<ellipse cx="1408.7" cy="365.4" rx="0.7" ry="0.34" transform="rotate(-6 1408.7 365.4)"/>
<ellipse cx="1446.4" cy="347.2" rx="0.8" ry="0.72" transform="rotate(52 1446.4 347.2)"/>
<ellipse cx="1322.0" cy="324.2" rx="2.4" ry="1.00" transform="rotate(20 1322.0 324.2)"/>
<ellipse cx="1338.1" cy="357.9" rx="1.5" ry="0.93" transform="rotate(-47 1338.1 357.9)"/>
<ellipse cx="1240.4" cy="305.5" rx="1.8" ry="1.58" transform="rotate(-45 1240.4 305.5)"/>
<ellipse cx="1528.4" cy="328.1" rx="1.5" ry="1.18" transform="rotate(-23 1528.4 328.1)"/>
<ellipse cx="1476.3" cy="306.7" rx="2.4" ry="1.19" transform="rotate(5 1476.3 306.7)"/>
<ellipse cx="1360.1" cy="348.9" rx="2.4" ry="1.00" transform="rotate(-11 1360.1 348.9)"/>
<ellipse cx="1228.2" cy="297.2" rx="0.8" ry="0.64" transform="rotate(-53 1228.2 297.2)"/>
<ellipse cx="1278.4" cy="302.3" rx="1.5" ry="0.87" transform="rotate(-20 1278.4 302.3)"/>
<ellipse cx="1525.0" cy="298.8" rx="1.5" ry="1.29" transform="rotate(-24 1525.0 298.8)"/>
<ellipse cx="1449.5" cy="397.6" rx="0.8" ry="0.33" transform="rotate(-32 1449.5 397.6)"/>
<ellipse cx="1525.0" cy="360.2" rx="1.2" ry="1.03" transform="rotate(38 1525.0 360.2)"/>
<ellipse cx="1258.1" cy="379.9" rx="0.7" ry="0.56" transform="rotate(29 1258.1 379.9)"/>
<ellipse cx="1412.4" cy="349.7" rx="1.5" ry="0.95" transform="rotate(34 1412.4 349.7)"/>
<ellipse cx="1408.6" cy="382.6" rx="1.8" ry="1.40" transform="rotate(-30 1408.6 382.6)"/>
<ellipse cx="1236.0" cy="297.1" rx="1.5" ry="0.72" transform="rotate(-9 1236.0 297.1)"/>
<ellipse cx="1249.2" cy="303.9" rx="0.8" ry="0.40" transform="rotate(-9 1249.2 303.9)"/>
<ellipse cx="1271.3" cy="314.8" rx="2.4" ry="1.70" transform="rotate(21 1271.3 314.8)"/>
<ellipse cx="1430.9" cy="312.7" rx="1.2" ry="0.66" transform="rotate(8 1430.9 312.7)"/>
<ellipse cx="1336.2" cy="423.1" rx="1" ry="0.62" transform="rotate(-38 1336.2 423.1)"/>
<ellipse cx="1291.5" cy="341.4" rx="1" ry="0.56" transform="rotate(-12 1291.5 341.4)"/>
<ellipse cx="1290.2" cy="435.7" rx="2.4" ry="2.15" transform="rotate(-48 1290.2 435.7)"/>
<ellipse cx="1228.1" cy="343.6" rx="0.8" ry="0.34" transform="rotate(12 1228.1 343.6)"/>
<ellipse cx="1484.1" cy="325.8" rx="0.8" ry="0.47" transform="rotate(44 1484.1 325.8)"/>
<ellipse cx="1361.0" cy="337.5" rx="0.7" ry="0.32" transform="rotate(12 1361.0 337.5)"/>
<ellipse cx="1416.5" cy="330.0" rx="1.5" ry="0.86" transform="rotate(-55 1416.5 330.0)"/>
<ellipse cx="1347.9" cy="357.6" rx="1.2" ry="0.53" transform="rotate(-56 1347.9 357.6)"/>
<ellipse cx="1376.1" cy="377.5" rx="1.8" ry="0.81" transform="rotate(-13 1376.1 377.5)"/>
<ellipse cx="1244.6" cy="320.3" rx="1.2" ry="0.73" transform="rotate(-26 1244.6 320.3)"/>
<ellipse cx="1315.0" cy="461.6" rx="1.2" ry="0.93" transform="rotate(46 1315.0 461.6)"/>
<ellipse cx="1349.6" cy="294.3" rx="1.5" ry="1.08" transform="rotate(-13 1349.6 294.3)"/>
<ellipse cx="1346.6" cy="459.6" rx="1.8" ry="1.53" transform="rotate(-9 1346.6 459.6)"/>
<ellipse cx="1481.6" cy="363.7" rx="1.5" ry="0.95" transform="rotate(-40 1481.6 363.7)"/>
<ellipse cx="1219.8" cy="389.7" rx="1.8" ry="0.80" transform="rotate(15 1219.8 389.7)"/>
<ellipse cx="1335.5" cy="381.3" rx="1" ry="0.57" transform="rotate(-41 1335.5 381.3)"/>
<ellipse cx="1270.8" cy="303.0" rx="1.8" ry="1.16" transform="rotate(37 1270.8 303.0)"/>
<ellipse cx="1529.2" cy="326.3" rx="1" ry="0.82" transform="rotate(-55 1529.2 326.3)"/>
<ellipse cx="1511.7" cy="347.3" rx="1.8" ry="0.80" transform="rotate(25 1511.7 347.3)"/>
<ellipse cx="1278.7" cy="375.7" rx="1" ry="0.42" transform="rotate(53 1278.7 375.7)"/>
<ellipse cx="1265.9" cy="355.3" rx="1" ry="0.52" transform="rotate(27 1265.9 355.3)"/>
<ellipse cx="1506.6" cy="298.4" rx="0.7" ry="0.51" transform="rotate(-21 1506.6 298.4)"/>
<ellipse cx="1341.7" cy="372.6" rx="1.2" ry="0.87" transform="rotate(-23 1341.7 372.6)"/>
<ellipse cx="1296.0" cy="360.7" rx="1.5" ry="0.94" transform="rotate(-7 1296.0 360.7)"/>
<ellipse cx="1222.6" cy="401.8" rx="2.4" ry="1.52" transform="rotate(-6 1222.6 401.8)"/>
<ellipse cx="1416.0" cy="437.6" rx="1" ry="0.81" transform="rotate(-12 1416.0 437.6)"/>
<ellipse cx="1236.8" cy="355.2" rx="1.5" ry="0.67" transform="rotate(-7 1236.8 355.2)"/>
<ellipse cx="1380.8" cy="298.3" rx="1" ry="0.44" transform="rotate(28 1380.8 298.3)"/>
<ellipse cx="1467.7" cy="382.6" rx="0.7" ry="0.54" transform="rotate(47 1467.7 382.6)"/>
<ellipse cx="1223.4" cy="302.9" rx="0.8" ry="0.40" transform="rotate(58 1223.4 302.9)"/>
<ellipse cx="1374.9" cy="462.2" rx="1" ry="0.74" transform="rotate(27 1374.9 462.2)"/>
<ellipse cx="1286.9" cy="440.1" rx="1.2" ry="0.58" transform="rotate(48 1286.9 440.1)"/>
<ellipse cx="1304.4" cy="437.0" rx="1" ry="0.53" transform="rotate(56 1304.4 437.0)"/>
<ellipse cx="1371.0" cy="396.9" rx="1" ry="0.56" transform="rotate(-56 1371.0 396.9)"/>
<ellipse cx="1274.2" cy="319.9" rx="1.2" ry="0.89" transform="rotate(47 1274.2 319.9)"/>
<ellipse cx="1269.8" cy="431.5" rx="0.8" ry="0.63" transform="rotate(-54 1269.8 431.5)"/>
<ellipse cx="1362.2" cy="384.3" rx="0.8" ry="0.42" transform="rotate(4 1362.2 384.3)"/>
<ellipse cx="1335.7" cy="358.3" rx="1.5" ry="1.03" transform="rotate(-17 1335.7 358.3)"/>
<ellipse cx="1463.5" cy="370.2" rx="1" ry="0.71" transform="rotate(55 1463.5 370.2)"/>
<ellipse cx="1311.3" cy="383.4" rx="1.2" ry="0.86" transform="rotate(58 1311.3 383.4)"/>
<ellipse cx="1316.6" cy="291.3" rx="0.7" ry="0.36" transform="rotate(-25 1316.6 291.3)"/>
<ellipse cx="1418.3" cy="365.8" rx="1.5" ry="1.27" transform="rotate(-44 1418.3 365.8)"/>
<ellipse cx="1288.9" cy="407.9" rx="0.7" ry="0.30" transform="rotate(8 1288.9 407.9)"/>
<ellipse cx="1313.7" cy="384.6" rx="1" ry="0.61" transform="rotate(-24 1313.7 384.6)"/>
<ellipse cx="1258.5" cy="356.6" rx="2.4" ry="1.15" transform="rotate(-58 1258.5 356.6)"/>
<ellipse cx="1361.5" cy="302.4" rx="1" ry="0.84" transform="rotate(34 1361.5 302.4)"/>
<ellipse cx="1345.6" cy="338.3" rx="0.7" ry="0.30" transform="rotate(39 1345.6 338.3)"/>
<ellipse cx="1383.2" cy="379.2" rx="1" ry="0.85" transform="rotate(-55 1383.2 379.2)"/>
<ellipse cx="1387.7" cy="363.7" rx="1" ry="0.48" transform="rotate(49 1387.7 363.7)"/>
<ellipse cx="1249.1" cy="400.7" rx="1" ry="0.47" transform="rotate(-36 1249.1 400.7)"/>
<ellipse cx="1412.6" cy="381.7" rx="1.8" ry="1.45" transform="rotate(-39 1412.6 381.7)"/>
<ellipse cx="1315.5" cy="344.7" rx="0.7" ry="0.63" transform="rotate(27 1315.5 344.7)"/>
<ellipse cx="1370.3" cy="387.4" rx="1.8" ry="1.48" transform="rotate(29 1370.3 387.4)"/>
<ellipse cx="1362.1" cy="331.4" rx="0.8" ry="0.42" transform="rotate(17 1362.1 331.4)"/>
<ellipse cx="1255.1" cy="450.5" rx="1.2" ry="0.91" transform="rotate(-28 1255.1 450.5)"/>
<ellipse cx="1395.0" cy="369.1" rx="1.2" ry="0.66" transform="rotate(51 1395.0 369.1)"/>
<ellipse cx="1379.9" cy="321.4" rx="1" ry="0.82" transform="rotate(-36 1379.9 321.4)"/>
<ellipse cx="1266.7" cy="454.8" rx="1" ry="0.84" transform="rotate(-21 1266.7 454.8)"/>
<ellipse cx="1292.7" cy="453.5" rx="2.4" ry="1.53" transform="rotate(4 1292.7 453.5)"/>
<ellipse cx="1217.1" cy="295.7" rx="1" ry="0.69" transform="rotate(-23 1217.1 295.7)"/>
<ellipse cx="1283.9" cy="402.4" rx="0.8" ry="0.55" transform="rotate(-39 1283.9 402.4)"/>
<ellipse cx="1225.7" cy="311.0" rx="1" ry="0.57" transform="rotate(-43 1225.7 311.0)"/>
<ellipse cx="1224.3" cy="298.5" rx="0.7" ry="0.52" transform="rotate(28 1224.3 298.5)"/>
<ellipse cx="1236.4" cy="396.7" rx="1.5" ry="0.75" transform="rotate(55 1236.4 396.7)"/>
<ellipse cx="1446.2" cy="359.7" rx="1" ry="0.50" transform="rotate(-47 1446.2 359.7)"/>
<ellipse cx="1226.2" cy="442.7" rx="0.8" ry="0.65" transform="rotate(16 1226.2 442.7)"/>
<ellipse cx="1308.4" cy="308.9" rx="0.8" ry="0.64" transform="rotate(18 1308.4 308.9)"/>
<ellipse cx="1310.7" cy="351.2" rx="1.2" ry="0.49" transform="rotate(-29 1310.7 351.2)"/>
<ellipse cx="1306.8" cy="419.1" rx="1.5" ry="1.28" transform="rotate(32 1306.8 419.1)"/>
<ellipse cx="1410.7" cy="376.2" rx="1.2" ry="0.85" transform="rotate(-56 1410.7 376.2)"/>
<ellipse cx="1349.2" cy="369.1" rx="0.8" ry="0.46" transform="rotate(25 1349.2 369.1)"/>
<ellipse cx="1389.8" cy="329.8" rx="0.8" ry="0.55" transform="rotate(-26 1389.8 329.8)"/>
<ellipse cx="1356.7" cy="384.7" rx="1.2" ry="0.94" transform="rotate(57 1356.7 384.7)"/>
<ellipse cx="1216.4" cy="378.9" rx="2.4" ry="1.79" transform="rotate(39 1216.4 378.9)"/>
<ellipse cx="1402.9" cy="319.4" rx="1" ry="0.87" transform="rotate(-32 1402.9 319.4)"/>
<ellipse cx="1268.9" cy="459.0" rx="0.8" ry="0.52" transform="rotate(59 1268.9 459.0)"/>
<ellipse cx="1397.4" cy="309.7" rx="1.5" ry="0.87" transform="rotate(-12 1397.4 309.7)"/>
<ellipse cx="1243.0" cy="450.0" rx="0.7" ry="0.41" transform="rotate(-24 1243.0 450.0)"/>
<ellipse cx="1354.1" cy="388.5" rx="1" ry="0.59" transform="rotate(46 1354.1 388.5)"/>
<ellipse cx="1290.9" cy="373.5" rx="0.7" ry="0.40" transform="rotate(-21 1290.9 373.5)"/>
<ellipse cx="1265.5" cy="441.9" rx="1.5" ry="0.73" transform="rotate(-7 1265.5 441.9)"/>
<ellipse cx="1466.4" cy="394.7" rx="1" ry="0.57" transform="rotate(17 1466.4 394.7)"/>
<ellipse cx="1441.4" cy="381.9" rx="1.2" ry="0.66" transform="rotate(24 1441.4 381.9)"/>
<ellipse cx="1265.7" cy="335.3" rx="1.5" ry="1.05" transform="rotate(-18 1265.7 335.3)"/>
<ellipse cx="1291.8" cy="462.1" rx="1.2" ry="1.07" transform="rotate(27 1291.8 462.1)"/>
<ellipse cx="1248.1" cy="463.3" rx="0.8" ry="0.40" transform="rotate(-42 1248.1 463.3)"/>
<ellipse cx="1263.2" cy="345.1" rx="1.2" ry="0.74" transform="rotate(-36 1263.2 345.1)"/>
<ellipse cx="1422.3" cy="310.1" rx="1" ry="0.84" transform="rotate(-4 1422.3 310.1)"/>
<ellipse cx="1219.1" cy="443.9" rx="1.8" ry="1.34" transform="rotate(0 1219.1 443.9)"/>
<ellipse cx="1420.5" cy="373.9" rx="1" ry="0.53" transform="rotate(29 1420.5 373.9)"/>
<ellipse cx="1423.6" cy="395.5" rx="1" ry="0.74" transform="rotate(17 1423.6 395.5)"/>
<ellipse cx="1362.5" cy="347.0" rx="0.8" ry="0.68" transform="rotate(-31 1362.5 347.0)"/>
<ellipse cx="1345.0" cy="418.6" rx="1" ry="0.53" transform="rotate(-9 1345.0 418.6)"/>
<ellipse cx="1362.9" cy="402.3" rx="1.8" ry="1.19" transform="rotate(19 1362.9 402.3)"/>
<ellipse cx="1321.6" cy="292.9" rx="2.4" ry="2.05" transform="rotate(-47 1321.6 292.9)"/>
<ellipse cx="1296.6" cy="330.0" rx="1" ry="0.66" transform="rotate(-48 1296.6 330.0)"/>
<ellipse cx="1401.7" cy="387.8" rx="2.4" ry="1.57" transform="rotate(17 1401.7 387.8)"/>
<ellipse cx="1484.4" cy="384.4" rx="1.8" ry="1.39" transform="rotate(-5 1484.4 384.4)"/>
<ellipse cx="1536.8" cy="323.9" rx="0.8" ry="0.61" transform="rotate(14 1536.8 323.9)"/>
<ellipse cx="1422.2" cy="336.2" rx="1.8" ry="1.08" transform="rotate(-58 1422.2 336.2)"/>
<ellipse cx="1351.0" cy="366.3" rx="1.5" ry="1.04" transform="rotate(-47 1351.0 366.3)"/>
<ellipse cx="1313.6" cy="362.7" rx="1" ry="0.90" transform="rotate(55 1313.6 362.7)"/>
<ellipse cx="1365.2" cy="320.5" rx="0.8" ry="0.64" transform="rotate(16 1365.2 320.5)"/>
<ellipse cx="1367.5" cy="391.6" rx="1" ry="0.81" transform="rotate(-42 1367.5 391.6)"/>
<ellipse cx="1473.5" cy="365.0" rx="1.2" ry="0.94" transform="rotate(18 1473.5 365.0)"/>
<ellipse cx="1468.5" cy="375.0" rx="1" ry="0.53" transform="rotate(-15 1468.5 375.0)"/>
<ellipse cx="1297.4" cy="367.3" rx="1" ry="0.64" transform="rotate(37 1297.4 367.3)"/>
<ellipse cx="1474.6" cy="355.1" rx="1.2" ry="0.67" transform="rotate(-2 1474.6 355.1)"/>
<ellipse cx="1417.6" cy="306.3" rx="1.5" ry="0.71" transform="rotate(-24 1417.6 306.3)"/>
<ellipse cx="1340.2" cy="306.3" rx="1.5" ry="1.19" transform="rotate(-43 1340.2 306.3)"/>
<ellipse cx="1219.9" cy="293.1" rx="0.8" ry="0.58" transform="rotate(-30 1219.9 293.1)"/>
<ellipse cx="1248.0" cy="316.5" rx="1" ry="0.49" transform="rotate(-6 1248.0 316.5)"/>
<ellipse cx="1470.1" cy="328.3" rx="1.8" ry="1.43" transform="rotate(-40 1470.1 328.3)"/>
<ellipse cx="1487.6" cy="326.3" rx="1" ry="0.67" transform="rotate(29 1487.6 326.3)"/>
<ellipse cx="1357.5" cy="449.0" rx="0.8" ry="0.43" transform="rotate(-32 1357.5 449.0)"/>
<ellipse cx="1260.3" cy="379.3" rx="0.7" ry="0.45" transform="rotate(49 1260.3 379.3)"/>
<ellipse cx="1442.6" cy="335.1" rx="1" ry="0.67" transform="rotate(44 1442.6 335.1)"/>
<ellipse cx="1217.1" cy="441.5" rx="2.4" ry="1.80" transform="rotate(-0 1217.1 441.5)"/>
<ellipse cx="1311.5" cy="374.4" rx="1.8" ry="1.10" transform="rotate(55 1311.5 374.4)"/>
<ellipse cx="1239.5" cy="405.0" rx="0.7" ry="0.29" transform="rotate(-54 1239.5 405.0)"/>
<ellipse cx="1477.8" cy="307.8" rx="2.4" ry="1.54" transform="rotate(48 1477.8 307.8)"/>
<ellipse cx="1226.0" cy="419.6" rx="1" ry="0.57" transform="rotate(43 1226.0 419.6)"/>
<ellipse cx="1334.0" cy="375.9" rx="1" ry="0.54" transform="rotate(-19 1334.0 375.9)"/>
<ellipse cx="1296.8" cy="300.4" rx="1.2" ry="0.66" transform="rotate(39 1296.8 300.4)"/>
<ellipse cx="1346.2" cy="381.2" rx="1.2" ry="1.00" transform="rotate(-19 1346.2 381.2)"/>
<ellipse cx="1281.1" cy="379.1" rx="0.8" ry="0.45" transform="rotate(-22 1281.1 379.1)"/>
<ellipse cx="1312.2" cy="396.0" rx="0.8" ry="0.63" transform="rotate(-55 1312.2 396.0)"/>
<ellipse cx="1392.3" cy="299.9" rx="1.2" ry="0.55" transform="rotate(-54 1392.3 299.9)"/>
<ellipse cx="1482.1" cy="376.0" rx="0.7" ry="0.56" transform="rotate(49 1482.1 376.0)"/>
<ellipse cx="1284.1" cy="410.4" rx="2.4" ry="1.71" transform="rotate(-39 1284.1 410.4)"/>
<ellipse cx="785.8" cy="403.1" rx="1.8" ry="1.42" transform="rotate(50 785.8 403.1)"/>
<ellipse cx="783.6" cy="338.6" rx="1" ry="0.79" transform="rotate(7 783.6 338.6)"/>
<ellipse cx="672.2" cy="330.0" rx="1.8" ry="0.75" transform="rotate(-58 672.2 330.0)"/>
<ellipse cx="758.6" cy="365.6" rx="0.7" ry="0.45" transform="rotate(3 758.6 365.6)"/>
<ellipse cx="830.9" cy="390.8" rx="1.8" ry="1.24" transform="rotate(50 830.9 390.8)"/>
<ellipse cx="725.0" cy="292.8" rx="1.8" ry="1.25" transform="rotate(59 725.0 292.8)"/>
<ellipse cx="784.6" cy="311.0" rx="1.8" ry="1.21" transform="rotate(-50 784.6 311.0)"/>
<ellipse cx="732.2" cy="406.6" rx="0.7" ry="0.43" transform="rotate(-59 732.2 406.6)"/>
<ellipse cx="787.4" cy="418.3" rx="0.8" ry="0.41" transform="rotate(-45 787.4 418.3)"/>
<ellipse cx="732.3" cy="326.5" rx="1" ry="0.63" transform="rotate(29 732.3 326.5)"/>
<ellipse cx="858.4" cy="338.2" rx="1" ry="0.76" transform="rotate(-50 858.4 338.2)"/>
<ellipse cx="776.0" cy="382.5" rx="2.4" ry="1.76" transform="rotate(47 776.0 382.5)"/>
<ellipse cx="855.8" cy="297.8" rx="0.7" ry="0.28" transform="rotate(-58 855.8 297.8)"/>
<ellipse cx="782.2" cy="396.4" rx="0.8" ry="0.48" transform="rotate(-23 782.2 396.4)"/>
<ellipse cx="768.0" cy="414.5" rx="2.4" ry="1.69" transform="rotate(-22 768.0 414.5)"/>
<ellipse cx="865.7" cy="384.9" rx="2.4" ry="1.77" transform="rotate(-43 865.7 384.9)"/>
<ellipse cx="823.3" cy="337.9" rx="1" ry="0.71" transform="rotate(-10 823.3 337.9)"/>
<ellipse cx="708.0" cy="392.4" rx="1.2" ry="0.95" transform="rotate(8 708.0 392.4)"/>
<ellipse cx="681.9" cy="298.8" rx="1.5" ry="1.25" transform="rotate(27 681.9 298.8)"/>
<ellipse cx="604.3" cy="310.5" rx="1.2" ry="0.83" transform="rotate(57 604.3 310.5)"/>
<ellipse cx="668.9" cy="341.0" rx="1.8" ry="1.26" transform="rotate(48 668.9 341.0)"/>
<ellipse cx="826.1" cy="327.5" rx="0.7" ry="0.39" transform="rotate(-28 826.1 327.5)"/>
<ellipse cx="1422.0" cy="391.3" rx="0.7" ry="0.38" transform="rotate(-43 1422.0 391.3)"/>
<ellipse cx="1511.6" cy="350.7" rx="2.4" ry="1.38" transform="rotate(-50 1511.6 350.7)"/>
<ellipse cx="1477.5" cy="377.9" rx="1" ry="0.79" transform="rotate(27 1477.5 377.9)"/>
<ellipse cx="1537.5" cy="324.7" rx="0.7" ry="0.52" transform="rotate(-4 1537.5 324.7)"/>
<ellipse cx="1428.9" cy="318.8" rx="0.7" ry="0.56" transform="rotate(-5 1428.9 318.8)"/>
<ellipse cx="1412.3" cy="378.9" rx="0.8" ry="0.41" transform="rotate(10 1412.3 378.9)"/>
<ellipse cx="1473.1" cy="342.9" rx="1" ry="0.49" transform="rotate(-37 1473.1 342.9)"/>
<ellipse cx="1425.3" cy="367.4" rx="1.5" ry="1.03" transform="rotate(-17 1425.3 367.4)"/>
<ellipse cx="1434.5" cy="391.6" rx="2.4" ry="1.41" transform="rotate(-47 1434.5 391.6)"/>
<ellipse cx="1488.6" cy="376.8" rx="1" ry="0.56" transform="rotate(-56 1488.6 376.8)"/>
<ellipse cx="1439.3" cy="357.2" rx="0.8" ry="0.33" transform="rotate(59 1439.3 357.2)"/>
<ellipse cx="1521.3" cy="344.0" rx="1" ry="0.53" transform="rotate(34 1521.3 344.0)"/>
<ellipse cx="1459.6" cy="394.2" rx="1" ry="0.53" transform="rotate(-55 1459.6 394.2)"/>
<ellipse cx="1428.1" cy="310.7" rx="0.8" ry="0.33" transform="rotate(-56 1428.1 310.7)"/>
<ellipse cx="1451.7" cy="367.9" rx="2.4" ry="2.10" transform="rotate(49 1451.7 367.9)"/>
<ellipse cx="1409.0" cy="356.2" rx="1.8" ry="1.55" transform="rotate(25 1409.0 356.2)"/>
<ellipse cx="1412.6" cy="325.7" rx="1" ry="0.72" transform="rotate(55 1412.6 325.7)"/>
<ellipse cx="1493.8" cy="333.8" rx="2.4" ry="1.98" transform="rotate(-15 1493.8 333.8)"/>
<ellipse cx="1432.9" cy="369.6" rx="1" ry="0.42" transform="rotate(-29 1432.9 369.6)"/>
<ellipse cx="1449.3" cy="389.4" rx="0.7" ry="0.57" transform="rotate(-54 1449.3 389.4)"/>
<ellipse cx="1510.1" cy="368.3" rx="2.4" ry="1.03" transform="rotate(-43 1510.1 368.3)"/>
<ellipse cx="1494.8" cy="323.6" rx="2.4" ry="1.87" transform="rotate(-47 1494.8 323.6)"/>
<ellipse cx="1445.3" cy="319.0" rx="0.8" ry="0.47" transform="rotate(-14 1445.3 319.0)"/>
<ellipse cx="1461.8" cy="379.0" rx="0.7" ry="0.44" transform="rotate(50 1461.8 379.0)"/>
<ellipse cx="1511.8" cy="308.1" rx="1" ry="0.44" transform="rotate(14 1511.8 308.1)"/>
<ellipse cx="1452.2" cy="372.7" rx="2.4" ry="2.11" transform="rotate(51 1452.2 372.7)"/>
<ellipse cx="1453.9" cy="293.4" rx="0.8" ry="0.50" transform="rotate(-19 1453.9 293.4)"/>
<ellipse cx="1515.2" cy="343.1" rx="1.5" ry="0.71" transform="rotate(-33 1515.2 343.1)"/>
<ellipse cx="1407.9" cy="368.8" rx="1" ry="0.62" transform="rotate(-42 1407.9 368.8)"/>
<ellipse cx="1458.6" cy="317.9" rx="0.7" ry="0.37" transform="rotate(41 1458.6 317.9)"/>
<ellipse cx="1446.8" cy="309.3" rx="2.4" ry="1.09" transform="rotate(-5 1446.8 309.3)"/>
<ellipse cx="1467.5" cy="307.7" rx="0.7" ry="0.50" transform="rotate(35 1467.5 307.7)"/>
<ellipse cx="1529.5" cy="352.0" rx="1.2" ry="0.55" transform="rotate(31 1529.5 352.0)"/>
<ellipse cx="1535.9" cy="338.1" rx="1.2" ry="1.08" transform="rotate(51 1535.9 338.1)"/>
<ellipse cx="1413.7" cy="322.5" rx="1" ry="0.43" transform="rotate(27 1413.7 322.5)"/>
<ellipse cx="1402.2" cy="379.0" rx="1.5" ry="0.98" transform="rotate(-7 1402.2 379.0)"/>
<ellipse cx="1440.1" cy="330.3" rx="0.7" ry="0.60" transform="rotate(-34 1440.1 330.3)"/>
<ellipse cx="1480.0" cy="306.1" rx="1" ry="0.66" transform="rotate(-32 1480.0 306.1)"/>
<ellipse cx="1424.6" cy="356.5" rx="0.8" ry="0.68" transform="rotate(28 1424.6 356.5)"/>
<ellipse cx="1419.2" cy="364.0" rx="1" ry="0.69" transform="rotate(-36 1419.2 364.0)"/>
</g>
<circle cx="1361.5" cy="372.6" r="5.2" fill="none" stroke="#aad3df" stroke-width="1.6" stroke-opacity=".8"/>
<path d="M1253.5,524.9 1267.8,511.9 1276.3,508.9 1291.9,499.9 1300.4,487.7 1307.5,481.6 1325.3,472.7" fill="none" stroke="#aad3df" stroke-width="1.6" stroke-opacity=".85"/>
<path d="M1157.0,491.8 1165.5,489.3 1174.0,489.1 1178.3,493.2 1175.5,497.9 1168.3,496.8 1159.8,494.4Z" fill="#f6f4ee"/>
<path d="M1173.0,336.0 1177.8,331.5 1186.5,331.0 1193.5,334.8 1194.0,339.8 1187.8,343.0 1179.0,342.2 1174.0,339.8Z" fill="#f6f4ee"/>
<path d="M591.5,425.8 595.6,431.7 595.0,439.0 599.2,447.4 596.6,461.4 593.3,463.4 593.0,460.1 596.5,452.6 595.0,444.7 594.4,443.6 593.4,443.2 582.6,442.6 571.5,439.7 564.5,437.3 563.2,437.7 562.5,438.9 563.5,449.7 571.3,470.6 572.3,494.8 571.6,508.8 569.5,532.4 563.8,551.4 567.3,567.9 568.8,572.7 570.1,584.6 569.5,589.7 565.9,596.9 571.0,605.9 574.5,614.8 576.1,625.3 582.1,633.9 588.6,638.1 588.6,641.8 589.1,642.8 594.5,645.6 597.5,657.8 603.5,661.8 605.3,663.4 603.5,667.4 605.1,673.4 616.0,687.0 622.0,693.4 622.0,701.9 622.4,703.1 625.8,705.7 635.5,706.6 642.0,709.0 644.8,711.5 649.4,713.4 653.0,713.5 654.6,717.4 655.6,717.8 658.7,717.8 661.7,719.9 667.0,724.7 670.3,731.8 671.1,735.3 672.5,737.8 673.6,738.4 673.9,736.6 708.0,733.4 706.7,737.3 759.8,756.7 800.4,756.7 800.4,749.2 824.3,749.2 829.0,754.7 846.0,767.9 850.3,777.8 854.5,785.9 863.0,790.8 872.3,795.3 876.5,790.0 879.4,782.7 884.4,780.7 891.5,782.2 897.1,782.7 904.2,789.5 909.9,799.7 912.8,807.0 924.1,819.0 924.8,827.0 929.8,836.5 951.1,845.2 957.0,843.6 956.5,832.0 957.0,844.5 956.8,845.5 958.1,845.0 958.7,844.2 958.3,832.1 959.5,822.5 963.0,815.6 970.1,808.4 982.4,801.0 992.5,793.5 999.9,788.6 1007.3,784.9 1012.0,784.2 1021.8,786.9 1029.2,786.9 1030.3,786.5 1032.8,784.2 1037.8,788.0 1040.8,792.2 1045.7,795.0 1053.7,795.0 1058.3,794.1 1060.5,792.3 1066.2,796.5 1072.0,796.6 1073.0,796.2 1073.6,795.1 1072.8,789.4 1068.0,785.2 1068.5,781.7 1070.7,777.9 1070.4,776.6 1068.8,775.6 1072.1,774.3 1081.5,774.3 1086.2,775.4 1087.3,774.9 1087.8,773.5 1089.9,775.6 1091.1,775.9 1108.5,773.8 1116.5,776.6 1119.4,778.2 1122.8,784.8 1124.0,785.6 1130.6,786.0 1142.7,779.3 1147.9,782.4 1151.3,787.8 1159.6,797.3 1161.5,804.5 1159.5,811.2 1163.1,822.7 1176.1,846.2 1182.4,851.7 1183.7,856.8 1184.5,857.7 1188.4,857.9 1195.8,856.8 1198.4,853.0 1200.6,846.7 1202.1,838.4 1202.4,830.0 1200.6,823.2 1197.1,813.7 1194.9,803.2 1189.9,792.5 1184.7,779.7 1182.9,772.5 1182.2,767.1 1182.9,760.8 1184.9,754.5 1189.0,746.5 1193.1,741.7 1196.4,738.6 1203.5,734.4 1210.8,729.1 1214.5,724.7 1218.0,718.9 1222.2,716.0 1228.8,715.3 1230.0,716.0 1231.3,715.8 1232.1,714.9 1233.1,711.0 1242.8,702.4 1250.8,702.7 1251.5,702.1 1254.2,697.5 1258.6,694.4 1265.2,692.2 1266.0,691.5 1267.4,683.7 1260.0,661.3 1260.0,657.9 1265.1,650.6 1272.3,636.8 1273.1,633.6 1272.6,626.5 1274.2,626.2 1278.9,620.3 1281.9,618.3 1286.5,610.4 1288.0,601.6 1288.0,596.4 1287.5,595.2 1285.8,594.0 1289.8,589.3 1291.6,588.9 1302.3,583.6 1310.6,583.0 1322.0,581.3 1323.3,580.4 1324.1,578.0 1325.6,578.8 1329.2,578.8 1332.0,576.7 1332.6,577.9 1334.1,578.3 1339.2,576.3 1344.1,575.2 1344.7,574.5 1345.8,570.5 1344.3,565.4 1343.2,564.8 1339.9,564.4 1338.9,564.7 1338.2,565.5 1338.1,566.7 1340.1,570.0 1336.9,570.0 1335.5,567.9 1334.6,562.8 1331.2,560.3 1332.3,558.4 1335.5,556.6 1336.2,555.8 1336.1,554.4 1333.6,550.9 1334.7,547.1 1337.4,542.5 1341.4,537.1 1346.6,534.4 1356.9,530.2 1361.0,523.0 1368.2,524.6 1369.2,524.6 1378.0,520.5 1386.8,514.3 1387.4,513.1 1387.4,512.5 1385.6,512.9 1385.6,511.9 1381.3,505.9 1379.6,501.9 1379.2,496.8 1374.2,494.8 1374.4,466.7 1372.1,464.0 1367.2,460.6 1358.6,464.4 1353.9,458.5 1343.0,474.3 1342.3,480.1 1339.5,485.7 1337.3,493.8 1331.7,500.9 1330.9,504.3 1327.7,502.9 1323.1,504.9 1321.7,508.7 1276.0,508.9 1267.8,511.9 1260.7,519.9 1253.5,524.9 1251.4,526.8 1246.5,536.1 1219.5,536.1 1212.4,539.6 1214.2,543.3 1215.2,551.6 1199.6,559.9 1183.3,563.7 1166.9,573.7 1157.4,570.4 1156.3,566.6 1157.0,561.8 1162.7,560.9 1165.5,556.1 1166.6,548.3 1170.8,536.7 1165.5,501.9 1149.9,492.8 1152.0,489.1 1149.9,486.7 1144.9,486.7 1142.1,477.9 1135.7,478.9 1131.9,470.2 1082.2,440.8 1069.0,447.6 1064.7,447.1 1059.0,445.0 1046.9,442.1 1039.1,445.7 1030.6,440.8 1024.2,438.6 1017.1,433.9 1010.7,434.4 1005.0,435.9 998.7,433.1 993.7,431.8 992.3,427.9 990.1,418.8 985.8,417.5 985.8,425.8 593.2,425.8Z" fill="rgba(120,120,120,.17)" fill-rule="evenodd" stroke="#777" stroke-width="1.4" stroke-linejoin="round"/>
<g fill="none" stroke="#777" stroke-width="1.4" stroke-linejoin="round">
<path d="M575.5,483.6 583.3,483.6 587.6,485.7 591.8,486.7 593.2,491.8 594.7,496.2 600.4,497.9 606.0,495.4 611.7,494.4 616.0,496.4 623.8,494.2 633.0,492.4 638.7,490.3 647.2,488.7 676.7,488.7"/>
<path d="M675.0,425.8 675.0,480.1 676.7,488.7 679.2,492.8 682.7,496.8 679.9,503.9 677.7,509.9 672.8,519.9 676.3,527.8 675.2,531.8 675.2,567.6"/>
<path d="M572.0,567.6 760.1,567.6"/>
<path d="M633.0,567.6 633.0,623.5 709.3,694.5 710.1,698.0 712.1,710.0 708.0,721.9 710.8,728.2 708.0,733.4"/>
<path d="M717.6,567.6 717.6,673.6 712.5,674.5 707.7,676.7 708.3,684.1 709.3,694.5"/>
<path d="M760.1,508.9 760.1,586.5 887.9,586.5 887.9,659.5"/>
<path d="M760.1,508.9 859.5,508.9"/>
<path d="M859.5,425.8 859.5,586.5"/>
<path d="M788.5,586.5 788.5,756.7"/>
<path d="M887.9,605.1 983.8,605.1"/>
<path d="M717.6,659.5 993.4,659.5"/>
<path d="M874.4,659.5 874.4,668.3 917.0,668.3 917.0,702.1 921.3,704.9 928.4,708.3 936.9,709.1 944.0,709.5 946.8,713.8 956.8,716.0 965.3,714.6 973.8,716.0 980.9,713.8 988.0,713.4 995.4,717.8 1001.6,719.4 1001.6,745.5 1005.0,752.2 1008.6,759.6 1006.5,768.7 1006.5,776.9 1004.3,783.5"/>
<path d="M873.8,668.3 873.6,745.5 823.0,745.5 824.3,749.2"/>
<path d="M993.4,621.7 993.4,668.3 996.1,687.6 995.4,717.8"/>
<path d="M1001.6,728.4 1042.4,728.7"/>
<path d="M993.4,668.3 1056.9,668.3 1053.8,677.1 1063.3,677.1"/>
<path d="M993.4,621.7 989.4,617.1 989.4,609.7 983.8,605.1 978.8,599.6 977.1,594.4 975.9,586.5 974.9,580.8 972.4,573.3 968.8,563.7 967.4,558.0 963.9,556.1 956.8,551.2 946.8,552.2 938.3,548.3 859.5,548.3"/>
<path d="M977.1,594.4 1034.4,593.8 1038.8,598.1"/>
<path d="M967.4,558.0 966.0,546.4 967.4,538.6 1041.7,538.6"/>
<path d="M967.4,538.6 967.4,502.9 961.7,496.8 965.9,489.9 965.3,482.6 963.2,470.2 961.7,457.7 958.9,448.6 957.5,436.5 956.3,425.8"/>
<path d="M859.5,489.9 965.9,489.9"/>
<path d="M1029.2,473.3 1026.3,475.4 1026.3,486.7 1020.0,491.8 1018.1,497.9 1020.7,502.9 1019.2,513.9 1026.3,518.9 1032.0,522.9 1035.6,527.8 1041.3,532.7 1041.7,538.6 1042.7,547.4 1046.2,554.1 1049.8,558.0 1053.3,563.7 1056.9,569.5 1054.0,576.1 1044.1,578.6 1043.4,590.2 1038.8,598.1 1037.7,605.1 1039.8,610.7 1044.1,615.3 1049.1,623.5 1056.2,626.2 1056.5,630.2 1054.0,638.0 1061.1,643.4 1066.1,654.1 1071.1,659.5 1070.4,666.5 1066.1,668.3 1065.4,672.7 1063.3,677.1 1059.7,685.0 1057.6,691.9 1054.8,694.5 1051.2,702.3 1045.5,710.0 1043.4,716.8 1042.4,728.7 1043.4,735.4 1046.2,740.5 1042.0,747.2 1039.1,753.0 1036.3,762.1 1062.8,762.1 1061.8,768.7 1064.7,775.3"/>
<path d="M1049.9,558.0 1101.6,558.0"/>
<path d="M1071.1,659.5 1078.9,657.7 1081.0,652.4 1086.7,645.2 1093.1,642.5 1100.2,645.2 1107.3,643.4 1111.5,638.9 1119.4,636.7 1124.3,628.4 1132.6,621.7 1137.1,621.7 1141.4,627.1 1148.5,630.2 1158.4,628.4 1164.1,634.0 1169.8,630.8 1171.2,624.4 1176.2,619.8 1180.4,615.8 1188.9,610.7 1191.1,603.3 1192.5,597.7 1193.6,593.2"/>
<path d="M1086.7,645.2 1088.8,637.1 1093.8,629.3 1094.1,617.1 1094.1,572.1"/>
<path d="M1098.8,572.1 1132.6,572.1 1132.6,573.3 1152.0,572.7"/>
<path d="M1132.6,573.3 1132.6,621.7"/>
<path d="M1193.6,561.3 1193.6,610.3 1260.8,610.3 1263.5,608.3 1266.0,608.8"/>
<path d="M1208.4,610.3 1208.4,619.8 1213.8,615.3 1218.8,612.5 1223.7,612.1 1227.3,610.7 1231.5,612.5 1233.4,617.6 1236.5,621.7 1241.9,624.8 1242.9,629.0 1239.3,634.4 1243.6,636.2 1253.5,641.6"/>
<path d="M1260.8,610.3 1262.1,633.3 1271.3,633.5"/>
<path d="M1204.4,562.4 1204.4,567.6 1267.0,567.6 1271.3,575.2 1276.3,579.7 1270.6,586.5 1269.2,592.5 1271.3,597.7 1275.6,601.4 1270.6,607.0 1266.0,608.8 1264.2,614.3"/>
<path d="M1276.3,579.7 1287.6,586.5"/>
<path d="M1291.2,586.5 1293.3,581.8 1293.3,566.6 1296.6,553.2 1296.9,537.6 1294.7,536.7 1295.4,524.9 1295.4,508.9"/>
<path d="M1293.3,566.6 1317.5,567.2 1317.5,579.0"/>
<path d="M1317.5,567.2 1323.4,567.2 1324.1,569.5 1326.0,573.8 1327.1,577.1"/>
<path d="M1296.6,553.2 1308.1,553.6 1324.5,554.1 1330.2,550.7 1331.4,550.9"/>
<path d="M1308.1,553.6 1308.9,542.5 1310.3,534.7 1313.9,526.8 1320.3,518.9 1321.7,508.7"/>
<path d="M1333.1,546.8 1329.1,540.6 1329.2,537.2 1328.4,518.9 1327.7,502.9"/>
<path d="M1259.7,667.4 1177.2,666.7 1148.8,666.5 1115.8,666.0 1086.4,665.1 1086.4,668.3 1067.2,668.3"/>
<path d="M1054.8,694.5 1084.6,694.5 1121.5,694.9 1139.7,694.7 1157.0,694.5"/>
<path d="M1084.6,694.5 1086.0,696.2 1080.7,747.2 1081.7,774.8"/>
<path d="M1121.5,694.9 1127.5,730.9 1130.3,737.8 1128.6,747.2 1129.3,753.0 1130.0,762.1"/>
<path d="M1094.5,774.0 1095.2,770.4 1093.1,762.1 1130.0,762.1 1132.0,767.1 1169.6,769.2 1171.9,772.5 1172.6,766.3 1180.4,766.7"/>
<path d="M1157.0,694.5 1153.4,699.7 1159.8,704.0 1162.0,707.4 1169.8,716.8 1173.0,720.7 1179.7,727.9 1184.0,736.3 1185.4,743.8 1188.9,745.0"/>
<path d="M1157.0,694.5 1166.9,691.0 1186.1,691.9 1186.4,694.0 1187.8,692.8 1189.9,697.6 1205.7,698.0 1221.6,714.3"/>
<path d="M1139.7,694.7 1143.5,687.6 1151.3,684.6 1159.1,678.9 1164.1,676.2 1171.9,675.3 1177.2,666.7"/>
<path d="M1148.8,666.5 1157.0,662.1 1168.3,654.1 1173.0,649.9 1166.9,644.3 1164.1,638.5 1164.1,634.0"/>
<path d="M1173.0,649.9 1184.0,655.0 1196.8,650.6 1201.7,641.6 1208.1,633.5 1212.4,632.6 1217.3,628.0 1224.4,616.2 1231.8,621.1 1233.4,617.6"/>
<path d="M1053.0,477.0 1057.6,482.6 1071.8,486.1 1078.9,488.7 1086.0,490.8 1090.2,501.9 1093.1,506.9"/>
<path d="M1093.1,506.9 1093.8,512.3 1097.3,537.2 1100.6,556.8 1098.8,572.1"/>
<path d="M689.2,426.2 690.0,440.0 697.5,457.5 707.5,470.0 713.8,476.2 711.2,485.0 712.5,495.0 720.0,497.5 726.2,510.0 733.8,520.0 750.0,517.5 755.0,515.0 760.1,519.5"/>
</g>
<g fill="none" stroke="#b7a3b4" stroke-width="1" stroke-opacity=".75">
<path d="M716.5,423.5 706.5,398.5 694.0,378.5 676.5,358.5 656.5,338.5 641.5,326.0 632.8,316.0 632.8,291.0"/>
<path d="M775.2,291.0 775.2,425.0"/>
<path d="M894.0,291.0 897.8,425.0"/>
<path d="M985.2,417.2 986.5,338.5 1026.5,291.0"/>
<path d="M1208.5,377.2 1208.5,456.0 1209.5,466.0 1219.0,481.0 1231.5,486.0 1251.5,491.0 1266.5,494.8 1279.0,498.5 1284.0,503.5 1294.0,508.0"/>
<path d="M1374.0,291.8 1379.0,313.0 1382.8,333.0 1394.0,345.5 1406.5,358.0 1421.5,365.5 1429.0,353.0 1427.8,345.5 1436.5,340.5 1431.5,348.0 1434.0,358.0 1527.8,358.0 1527.8,371.8"/>
<path d="M1366.5,458.0 1369.0,448.0 1384.0,445.5 1399.0,444.2 1406.5,448.0"/>
<path d="M791.5,759.5 794.0,782.0 789.0,807.0 794.0,827.0 806.5,842.0 816.5,849.5 826.5,862.0 834.0,877.0 844.0,892.0 854.0,902.0"/>
<path d="M871.5,795.8 864.0,807.0 862.8,822.0 866.5,837.0 869.0,857.0 881.5,867.0 889.0,859.5 904.0,862.0 909.0,877.0 916.5,892.0 926.5,899.5 939.0,902.0"/>
<path d="M924.0,819.5 916.5,827.0 906.5,822.0 901.5,837.0 906.5,849.5 904.0,862.0"/>
<path d="M816.5,849.5 829.0,837.0 844.0,832.0 862.8,832.0"/>
</g>
<g fill="none" stroke="#7f6d9a" stroke-width="1.1" stroke-opacity=".45" stroke-linejoin="round">
<path d="M1534.0,293.0 1544.0,308.0 1552.8,320.5 1555.2,338.0 1556.5,355.5 1552.8,370.5 1551.5,388.0 1554.0,398.0 1569.0,403.0 1579.0,408.0 1584.0,413.0 1589.0,428.0 1594.0,448.0 1595.2,460.5 1591.5,475.5 1581.5,480.5 1569.0,479.2 1551.5,475.5 1539.0,474.2 1534.0,463.0 1519.0,460.5 1499.0,459.2 1489.0,463.0 1485.2,470.5 1494.0,485.5 1489.0,495.5 1479.0,505.5 1469.0,517.0"/>
<path d="M1526.5,373.0 1514.0,388.0 1494.0,413.0 1479.0,430.5 1480.2,453.0 1469.0,468.0 1461.5,483.0 1449.0,488.0 1436.5,478.0 1424.0,468.0 1429.0,460.5 1439.0,455.5 1434.0,448.0 1424.0,443.0 1409.0,448.0 1396.5,445.5"/>
<path d="M1480.2,453.0 1494.0,460.5"/>
<path d="M1204.0,877.0 1206.5,857.0 1210.2,837.0 1216.5,824.5 1226.5,820.8 1239.0,827.0 1246.5,837.0 1254.0,849.5 1264.0,859.5 1279.0,865.8 1291.5,877.0 1301.5,892.0 1309.0,907.0 1316.5,917.0"/>
<path d="M1129.0,887.0 1149.0,885.8 1174.0,884.5 1194.0,884.5 1204.0,877.0"/>
<path d="M1194.0,884.5 1219.0,887.0 1239.0,894.5 1259.0,902.0 1279.0,909.5 1294.0,917.0"/>
<path d="M1387.8,517.5 1394.0,537.5 1404.0,543.8 1419.0,537.5 1434.0,527.5 1449.0,520.0 1464.0,512.5 1479.0,506.2 1491.5,495.0 1495.2,486.2"/>
<path d="M439.0,306.0 444.0,323.5 461.5,348.5 479.0,366.0 494.0,378.5 514.0,396.0 534.0,411.0 556.5,431.0 566.5,438.5"/>
<ellipse cx="1583.3" cy="409.3" rx="4.5" ry="4.5"/>
<ellipse cx="1487.8" cy="528.8" rx="8" ry="5"/>
<ellipse cx="1418.25" cy="740.75" rx="5.5" ry="4.5"/>
</g>
<path d="M1058,917L1065,914.200L1085,912.600L1105,914L1112,917Z" fill="#f6f4ee"/>
<g font-size="14" fill="#4f4f4f" stroke="#f6f4ee" stroke-width="2.2" paint-order="stroke" stroke-opacity=".55">
<text x="1240.5" y="492.3">Ottawa</text>
<text x="1187" y="530.5">Toronto</text>
<text x="1257.8" y="607">New York</text>
<text x="1207.5" y="643.7">Washington</text>
<text x="720.3" y="717">Phoenix</text>
<text x="620" y="727">Los Angeles</text>
<text x="1092" y="894">La Habana</text>
<text x="907.8" y="918">Ciudad</text>
</g><g font-size="14" fill="#76557f" stroke="#f6f4ee" stroke-width="2.2" paint-order="stroke" stroke-opacity=".55" letter-spacing=".65">
<text x="885.3" y="658.7">United States</text>
<text x="894.5" y="676.2">of America</text>
<text x="861.5" y="887">México</text>
<text x="1194.3" y="878">The Bahamas</text>
<text x="1182.8" y="915.7">Cuba</text>
</g>
<g fill="none" stroke="#5c5c5c" stroke-width="1">
<circle cx="1263.5" cy="501" r="2.4"/>
<circle cx="1263.5" cy="501" r="0.7"/>
<circle cx="1211.5" cy="535.5" r="1.6"/>
<circle cx="1243.3" cy="625.5" r="2.3"/>
<circle cx="1243.3" cy="625.5" r="0.7"/>
<circle cx="658.5" cy="710.5" r="1.6"/>
<circle cx="745.8" cy="722" r="1.6"/>
<circle cx="1168.3" cy="888.3" r="2.4"/>
<circle cx="1168.3" cy="888.3" r="0.7"/>
</g>
<ellipse cx="1177.4" cy="880.3" rx="6.5" ry="1.6" fill="#000" fill-opacity=".3"/>
<path d="M1166,852.5h23a3,3 0 0 1 3,3v14.3a3,3 0 0 1 -3,3h-5.5l-6.1,6.6l-6.1-6.600h-5.3a3,3 0 0 1 -3-3v-14.300a3,3 0 0 1 3-3z" fill="#858585" stroke="#a9a9a9" stroke-width=".8"/>
<path d="M1167,870.2v-9.2l4.3-3.5v3.500l4.300-3.500v3.500l4.300-3.500v3.500h3.600v-6h2.700v6h.8v9.200z" fill="#e2e2e2"/>
<path d="M1169.800,862.800h2.500v1.600h-2.500zM1174.500,862.800h2.500v1.600h-2.500zM1179.200,862.800h2.500v1.600h-2.500zM1169.800,866.200h2.500v1.600h-2.500zM1174.500,866.200h2.500v1.600h-2.500zM1179.200,866.200h2.500v1.600h-2.500z" fill="#858585"/>
<path d="M854.50,451.40 L844.81,442.10 A14,14 0 1 1 864.19,442.10 Z" fill="#3f3f3f" stroke="#fff" stroke-opacity=".86" stroke-width="9.5" stroke-linejoin="miter" stroke-miterlimit="4" paint-order="stroke"/>
<path d="M854.50,451.40 L844.81,442.10 A14,14 0 1 1 864.19,442.10 Z" fill="#3f3f3f"/>
<text x="854.50" y="434.20" font-size="13.300" font-weight="700" fill="#fff" stroke="#fff" stroke-width=".35" text-anchor="middle" letter-spacing="-.6">75</text>
<path d="M573.25,470.40 L563.56,461.10 A14,14 0 1 1 582.94,461.10 Z" fill="#3f3f3f" stroke="#fff" stroke-opacity=".86" stroke-width="9.5" stroke-linejoin="miter" stroke-miterlimit="4" paint-order="stroke"/>
<path d="M573.25,470.40 L563.56,461.10 A14,14 0 1 1 582.94,461.10 Z" fill="#3f3f3f"/>
<text x="573.25" y="453.20" font-size="13.300" font-weight="700" fill="#fff" stroke="#fff" stroke-width=".35" text-anchor="middle" letter-spacing="-.6">106</text>
<path d="M719.50,471.40 L709.81,462.10 A14,14 0 1 1 729.19,462.10 Z" fill="#3f3f3f" stroke="#fff" stroke-opacity=".86" stroke-width="9.5" stroke-linejoin="miter" stroke-miterlimit="4" paint-order="stroke"/>
<path d="M719.50,471.40 L709.81,462.10 A14,14 0 1 1 729.19,462.10 Z" fill="#3f3f3f"/>
<text x="719.50" y="454.20" font-size="13.300" font-weight="700" fill="#fff" stroke="#fff" stroke-width=".35" text-anchor="middle" letter-spacing="-.6">28</text>
<path d="M627.00,472.90 L617.31,463.60 A14,14 0 1 1 636.69,463.60 Z" fill="#3f3f3f" stroke="#fff" stroke-opacity=".86" stroke-width="9.5" stroke-linejoin="miter" stroke-miterlimit="4" paint-order="stroke"/>
<path d="M627.00,472.90 L617.31,463.60 A14,14 0 1 1 636.69,463.60 Z" fill="#3f3f3f"/>
<text x="627.00" y="455.70" font-size="13.300" font-weight="700" fill="#fff" stroke="#fff" stroke-width=".35" text-anchor="middle" letter-spacing="-.6">72</text>
<path d="M1072.00,486.40 L1062.31,477.10 A14,14 0 1 1 1081.69,477.10 Z" fill="#3f3f3f" stroke="#fff" stroke-opacity=".86" stroke-width="9.5" stroke-linejoin="miter" stroke-miterlimit="4" paint-order="stroke"/>
<path d="M1072.00,486.40 L1062.31,477.10 A14,14 0 1 1 1081.69,477.10 Z" fill="#3f3f3f"/>
<text x="1072.00" y="469.20" font-size="13.300" font-weight="700" fill="#fff" stroke="#fff" stroke-width=".35" text-anchor="middle" letter-spacing="-.6">30</text>
<path d="M973.25,488.15 L963.56,478.85 A14,14 0 1 1 982.94,478.85 Z" fill="#3f3f3f" stroke="#fff" stroke-opacity=".86" stroke-width="9.5" stroke-linejoin="miter" stroke-miterlimit="4" paint-order="stroke"/>
<path d="M973.25,488.15 L963.56,478.85 A14,14 0 1 1 982.94,478.85 Z" fill="#3f3f3f"/>
<text x="973.25" y="470.95" font-size="13.300" font-weight="700" fill="#fff" stroke="#fff" stroke-width=".35" text-anchor="middle" letter-spacing="-.6">168</text>
<path d="M780.75,501.40 L771.06,492.10 A14,14 0 1 1 790.44,492.10 Z" fill="#3f3f3f" stroke="#fff" stroke-opacity=".86" stroke-width="9.5" stroke-linejoin="miter" stroke-miterlimit="4" paint-order="stroke"/>
<path d="M780.75,501.40 L771.06,492.10 A14,14 0 1 1 790.44,492.10 Z" fill="#3f3f3f"/>
<text x="780.75" y="484.20" font-size="13.300" font-weight="700" fill="#fff" stroke="#fff" stroke-width=".35" text-anchor="middle" letter-spacing="-.6">25</text>
<path d="M1330.25,514.40 L1320.56,505.10 A14,14 0 1 1 1339.94,505.10 Z" fill="#3f3f3f" stroke="#fff" stroke-opacity=".86" stroke-width="9.5" stroke-linejoin="miter" stroke-miterlimit="4" paint-order="stroke"/>
<path d="M1330.25,514.40 L1320.56,505.10 A14,14 0 1 1 1339.94,505.10 Z" fill="#3f3f3f"/>
<text x="1330.25" y="497.20" font-size="13.300" font-weight="700" fill="#fff" stroke="#fff" stroke-width=".35" text-anchor="middle" letter-spacing="-.6">31</text>
<path d="M1133.50,517.40 L1123.81,508.10 A14,14 0 1 1 1143.19,508.10 Z" fill="#3f3f3f" stroke="#fff" stroke-opacity=".86" stroke-width="9.5" stroke-linejoin="miter" stroke-miterlimit="4" paint-order="stroke"/>
<path d="M1133.50,517.40 L1123.81,508.10 A14,14 0 1 1 1143.19,508.10 Z" fill="#3f3f3f"/>
<text x="1133.50" y="500.20" font-size="13.300" font-weight="700" fill="#fff" stroke="#fff" stroke-width=".35" text-anchor="middle" letter-spacing="-.6">10</text>
<path d="M914.50,517.65 L904.81,508.35 A14,14 0 1 1 924.19,508.35 Z" fill="#3f3f3f" stroke="#fff" stroke-opacity=".86" stroke-width="9.5" stroke-linejoin="miter" stroke-miterlimit="4" paint-order="stroke"/>
<path d="M914.50,517.65 L904.81,508.35 A14,14 0 1 1 924.19,508.35 Z" fill="#3f3f3f"/>
<text x="914.50" y="500.45" font-size="13.300" font-weight="700" fill="#fff" stroke="#fff" stroke-width=".35" text-anchor="middle" letter-spacing="-.6">4</text>
<path d="M1073.25,548.00 L1063.56,538.70 A14,14 0 1 1 1082.94,538.70 Z" fill="#3f3f3f" stroke="#fff" stroke-opacity=".86" stroke-width="9.5" stroke-linejoin="miter" stroke-miterlimit="4" paint-order="stroke"/>
<path d="M1073.25,548.00 L1063.56,538.70 A14,14 0 1 1 1082.94,538.70 Z" fill="#3f3f3f"/>
<text x="1073.25" y="530.80" font-size="13.300" font-weight="700" fill="#fff" stroke="#fff" stroke-width=".35" text-anchor="middle" letter-spacing="-.6">508</text>
<path d="M575.75,555.40 L566.06,546.10 A14,14 0 1 1 585.44,546.10 Z" fill="#3f3f3f" stroke="#fff" stroke-opacity=".86" stroke-width="9.5" stroke-linejoin="miter" stroke-miterlimit="4" paint-order="stroke"/>
<path d="M575.75,555.40 L566.06,546.10 A14,14 0 1 1 585.44,546.10 Z" fill="#3f3f3f"/>
<text x="575.75" y="538.20" font-size="13.300" font-weight="700" fill="#fff" stroke="#fff" stroke-width=".35" text-anchor="middle" letter-spacing="-.6">41</text>
<path d="M1277.00,570.40 L1267.31,561.10 A14,14 0 1 1 1286.69,561.10 Z" fill="#3f3f3f" stroke="#fff" stroke-opacity=".86" stroke-width="9.5" stroke-linejoin="miter" stroke-miterlimit="4" paint-order="stroke"/>
<path d="M1277.00,570.40 L1267.31,561.10 A14,14 0 1 1 1286.69,561.10 Z" fill="#3f3f3f"/>
<text x="1277.00" y="553.20" font-size="13.300" font-weight="700" fill="#fff" stroke="#fff" stroke-width=".35" text-anchor="middle" letter-spacing="-.6">478</text>
<path d="M979.50,574.65 L969.81,565.35 A14,14 0 1 1 989.19,565.35 Z" fill="#3f3f3f" stroke="#fff" stroke-opacity=".86" stroke-width="9.5" stroke-linejoin="miter" stroke-miterlimit="4" paint-order="stroke"/>
<path d="M979.50,574.65 L969.81,565.35 A14,14 0 1 1 989.19,565.35 Z" fill="#3f3f3f"/>
<text x="979.50" y="557.45" font-size="13.300" font-weight="700" fill="#fff" stroke="#fff" stroke-width=".35" text-anchor="middle" letter-spacing="-.6">255</text>
<path d="M724.50,575.40 L714.81,566.10 A14,14 0 1 1 734.19,566.10 Z" fill="#3f3f3f" stroke="#fff" stroke-opacity=".86" stroke-width="9.5" stroke-linejoin="miter" stroke-miterlimit="4" paint-order="stroke"/>
<path d="M724.50,575.40 L714.81,566.10 A14,14 0 1 1 734.19,566.10 Z" fill="#3f3f3f"/>
<text x="724.50" y="558.20" font-size="13.300" font-weight="700" fill="#fff" stroke="#fff" stroke-width=".35" text-anchor="middle" letter-spacing="-.6">187</text>
<path d="M1229.50,585.40 L1219.81,576.10 A14,14 0 1 1 1239.19,576.10 Z" fill="#3f3f3f" stroke="#fff" stroke-opacity=".86" stroke-width="9.5" stroke-linejoin="miter" stroke-miterlimit="4" paint-order="stroke"/>
<path d="M1229.50,585.40 L1219.81,576.10 A14,14 0 1 1 1239.19,576.10 Z" fill="#3f3f3f"/>
<text x="1229.50" y="568.20" font-size="13.300" font-weight="700" fill="#fff" stroke="#fff" stroke-width=".35" text-anchor="middle" letter-spacing="-.6">459</text>
<path d="M817.00,593.90 L807.31,584.60 A14,14 0 1 1 826.69,584.60 Z" fill="#3f3f3f" stroke="#fff" stroke-opacity=".86" stroke-width="9.5" stroke-linejoin="miter" stroke-miterlimit="4" paint-order="stroke"/>
<path d="M817.00,593.90 L807.31,584.60 A14,14 0 1 1 826.69,584.60 Z" fill="#3f3f3f"/>
<text x="817.00" y="576.70" font-size="13.300" font-weight="700" fill="#fff" stroke="#fff" stroke-width=".35" text-anchor="middle" letter-spacing="-.6">480</text>
<path d="M1132.00,600.90 L1122.31,591.60 A14,14 0 1 1 1141.69,591.60 Z" fill="#3f3f3f" stroke="#fff" stroke-opacity=".86" stroke-width="9.5" stroke-linejoin="miter" stroke-miterlimit="4" paint-order="stroke"/>
<path d="M1132.00,600.90 L1122.31,591.60 A14,14 0 1 1 1141.69,591.60 Z" fill="#3f3f3f"/>
<text x="1132.00" y="583.70" font-size="13.300" font-weight="700" fill="#fff" stroke="#fff" stroke-width=".35" text-anchor="middle" letter-spacing="-.6">1224</text>
<path d="M922.00,625.90 L912.31,616.60 A14,14 0 1 1 931.69,616.60 Z" fill="#3f3f3f" stroke="#fff" stroke-opacity=".86" stroke-width="9.5" stroke-linejoin="miter" stroke-miterlimit="4" paint-order="stroke"/>
<path d="M922.00,625.90 L912.31,616.60 A14,14 0 1 1 931.69,616.60 Z" fill="#3f3f3f"/>
<text x="922.00" y="608.70" font-size="13.300" font-weight="700" fill="#fff" stroke="#fff" stroke-width=".35" text-anchor="middle" letter-spacing="-.6">252</text>
<path d="M772.00,640.40 L762.31,631.10 A14,14 0 1 1 781.69,631.10 Z" fill="#3f3f3f" stroke="#fff" stroke-opacity=".86" stroke-width="9.5" stroke-linejoin="miter" stroke-miterlimit="4" paint-order="stroke"/>
<path d="M772.00,640.40 L762.31,631.10 A14,14 0 1 1 781.69,631.10 Z" fill="#3f3f3f"/>
<text x="772.00" y="623.20" font-size="13.300" font-weight="700" fill="#fff" stroke="#fff" stroke-width=".35" text-anchor="middle" letter-spacing="-.6">5</text>
<path d="M1055.75,655.40 L1046.06,646.10 A14,14 0 1 1 1065.44,646.10 Z" fill="#3f3f3f" stroke="#fff" stroke-opacity=".86" stroke-width="9.5" stroke-linejoin="miter" stroke-miterlimit="4" paint-order="stroke"/>
<path d="M1055.75,655.40 L1046.06,646.10 A14,14 0 1 1 1065.44,646.10 Z" fill="#3f3f3f"/>
<text x="1055.75" y="638.20" font-size="13.300" font-weight="700" fill="#fff" stroke="#fff" stroke-width=".35" text-anchor="middle" letter-spacing="-.6">444</text>
<path d="M1195.75,657.90 L1186.06,648.60 A14,14 0 1 1 1205.44,648.60 Z" fill="#3f3f3f" stroke="#fff" stroke-opacity=".86" stroke-width="9.5" stroke-linejoin="miter" stroke-miterlimit="4" paint-order="stroke"/>
<path d="M1195.75,657.90 L1186.06,648.60 A14,14 0 1 1 1205.44,648.60 Z" fill="#3f3f3f"/>
<text x="1195.75" y="640.70" font-size="13.300" font-weight="700" fill="#fff" stroke="#fff" stroke-width=".35" text-anchor="middle" letter-spacing="-.6">503</text>
<path d="M616.00,680.90 L606.31,671.60 A14,14 0 1 1 625.69,671.60 Z" fill="#3f3f3f" stroke="#fff" stroke-opacity=".86" stroke-width="9.5" stroke-linejoin="miter" stroke-miterlimit="4" paint-order="stroke"/>
<path d="M616.00,680.90 L606.31,671.60 A14,14 0 1 1 625.69,671.60 Z" fill="#3f3f3f"/>
<text x="616.00" y="663.70" font-size="13.300" font-weight="700" fill="#fff" stroke="#fff" stroke-width=".35" text-anchor="middle" letter-spacing="-.6">587</text>
<path d="M814.50,696.40 L804.81,687.10 A14,14 0 1 1 824.19,687.10 Z" fill="#3f3f3f" stroke="#fff" stroke-opacity=".86" stroke-width="9.5" stroke-linejoin="miter" stroke-miterlimit="4" paint-order="stroke"/>
<path d="M814.50,696.40 L804.81,687.10 A14,14 0 1 1 824.19,687.10 Z" fill="#3f3f3f"/>
<text x="814.50" y="679.20" font-size="13.300" font-weight="700" fill="#fff" stroke="#fff" stroke-width=".35" text-anchor="middle" letter-spacing="-.6">208</text>
<path d="M942.00,706.40 L932.31,697.10 A14,14 0 1 1 951.69,697.10 Z" fill="#3f3f3f" stroke="#fff" stroke-opacity=".86" stroke-width="9.5" stroke-linejoin="miter" stroke-miterlimit="4" paint-order="stroke"/>
<path d="M942.00,706.40 L932.31,697.10 A14,14 0 1 1 951.69,697.10 Z" fill="#3f3f3f"/>
<text x="942.00" y="689.20" font-size="13.300" font-weight="700" fill="#fff" stroke="#fff" stroke-width=".35" text-anchor="middle" letter-spacing="-.6">877</text>
<path d="M713.25,707.90 L703.56,698.60 A14,14 0 1 1 722.94,698.60 Z" fill="#3f3f3f" stroke="#fff" stroke-opacity=".86" stroke-width="9.5" stroke-linejoin="miter" stroke-miterlimit="4" paint-order="stroke"/>
<path d="M713.25,707.90 L703.56,698.60 A14,14 0 1 1 722.94,698.60 Z" fill="#3f3f3f"/>
<text x="713.25" y="690.70" font-size="13.300" font-weight="700" fill="#fff" stroke="#fff" stroke-width=".35" text-anchor="middle" letter-spacing="-.6">161</text>
<path d="M1138.25,710.40 L1128.56,701.10 A14,14 0 1 1 1147.94,701.10 Z" fill="#3f3f3f" stroke="#fff" stroke-opacity=".86" stroke-width="9.5" stroke-linejoin="miter" stroke-miterlimit="4" paint-order="stroke"/>
<path d="M1138.25,710.40 L1128.56,701.10 A14,14 0 1 1 1147.94,701.10 Z" fill="#3f3f3f"/>
<text x="1138.25" y="693.20" font-size="13.300" font-weight="700" fill="#fff" stroke="#fff" stroke-width=".35" text-anchor="middle" letter-spacing="-.6">332</text>
<path d="M890.75,749.65 L881.06,740.35 A14,14 0 1 1 900.44,740.35 Z" fill="#3f3f3f" stroke="#fff" stroke-opacity=".86" stroke-width="9.5" stroke-linejoin="miter" stroke-miterlimit="4" paint-order="stroke"/>
<path d="M890.75,749.65 L881.06,740.35 A14,14 0 1 1 900.44,740.35 Z" fill="#3f3f3f"/>
<text x="890.75" y="732.45" font-size="13.300" font-weight="700" fill="#fff" stroke="#fff" stroke-width=".35" text-anchor="middle" letter-spacing="-.6">687</text>
<path d="M1083.25,750.65 L1073.56,741.35 A14,14 0 1 1 1092.94,741.35 Z" fill="#3f3f3f" stroke="#fff" stroke-opacity=".86" stroke-width="9.5" stroke-linejoin="miter" stroke-miterlimit="4" paint-order="stroke"/>
<path d="M1083.25,750.65 L1073.56,741.35 A14,14 0 1 1 1092.94,741.35 Z" fill="#3f3f3f"/>
<text x="1083.25" y="733.45" font-size="13.300" font-weight="700" fill="#fff" stroke="#fff" stroke-width=".35" text-anchor="middle" letter-spacing="-.6">305</text>
<path d="M989.50,762.90 L979.81,753.60 A14,14 0 1 1 999.19,753.60 Z" fill="#3f3f3f" stroke="#fff" stroke-opacity=".86" stroke-width="9.5" stroke-linejoin="miter" stroke-miterlimit="4" paint-order="stroke"/>
<path d="M989.50,762.90 L979.81,753.60 A14,14 0 1 1 999.19,753.60 Z" fill="#3f3f3f"/>
<text x="989.50" y="745.70" font-size="13.300" font-weight="700" fill="#fff" stroke="#fff" stroke-width=".35" text-anchor="middle" letter-spacing="-.6">1452</text>
<path d="M1158.25,806.65 L1148.56,797.35 A14,14 0 1 1 1167.94,797.35 Z" fill="#3f3f3f" stroke="#fff" stroke-opacity=".86" stroke-width="9.5" stroke-linejoin="miter" stroke-miterlimit="4" paint-order="stroke"/>
<path d="M1158.25,806.65 L1148.56,797.35 A14,14 0 1 1 1167.94,797.35 Z" fill="#3f3f3f"/>
<text x="1158.25" y="789.45" font-size="13.300" font-weight="700" fill="#fff" stroke="#fff" stroke-width=".35" text-anchor="middle" letter-spacing="-.6">191</text>
<path d="M1027.00,810.90 L1017.31,801.60 A14,14 0 1 1 1036.69,801.60 Z" fill="#3f3f3f" stroke="#fff" stroke-opacity=".86" stroke-width="9.5" stroke-linejoin="miter" stroke-miterlimit="4" paint-order="stroke"/>
<path d="M1027.00,810.90 L1017.31,801.60 A14,14 0 1 1 1036.69,801.60 Z" fill="#3f3f3f"/>
<text x="1027.00" y="793.70" font-size="13.300" font-weight="700" fill="#fff" stroke="#fff" stroke-width=".35" text-anchor="middle" letter-spacing="-.6">92</text>
<path d="M918.25,816.65 L908.56,807.35 A14,14 0 1 1 927.94,807.35 Z" fill="#3f3f3f" stroke="#fff" stroke-opacity=".86" stroke-width="9.5" stroke-linejoin="miter" stroke-miterlimit="4" paint-order="stroke"/>
<path d="M918.25,816.65 L908.56,807.35 A14,14 0 1 1 927.94,807.35 Z" fill="#3f3f3f"/>
<text x="918.25" y="799.45" font-size="13.300" font-weight="700" fill="#fff" stroke="#fff" stroke-width=".35" text-anchor="middle" letter-spacing="-.6">99</text>
</svg>
  </div>

  <!-- map controls -->
  <div class="ctl" style="left:1631px;top:317px;width:167px;height:128px">
    <div class="abs" style="left:18.300px;top:15.800px;width:15.400px;height:15.400px;border:1px solid #6b6b6b;border-radius:50%;background:#fff"><div class="abs" style="left:2.600px;top:2.600px;width:8.200px;height:8.200px;border-radius:50%;background:#666"></div></div>
    <div class="abs" style="left:44px;top:14.800px;line-height:20px">Roadmap</div>
    <div class="abs" style="left:18.300px;top:42.900px;width:15.400px;height:15.400px;border:1px solid #6b6b6b;border-radius:50%;background:#fff"></div>
    <div class="abs" style="left:44px;top:41.900px;line-height:20px">Satellite</div>
    <div class="abs" style="left:12.300px;top:76.800px;width:141.300px;height:1px;background:#777"></div>
    <div class="abs" style="left:17.400px;top:93px;width:14.500px;height:14.500px;border:1px solid #6b6b6b;border-radius:3px;background:#fff"></div>
    <div class="abs" style="left:42.700px;top:92.100px;line-height:20px">Federal Lands</div>
  </div>
  <div class="ctl" style="left:1428px;top:868px;width:45px;height:45px">
    <svg style="left:10.500px;top:10.700px" width="24" height="24" viewBox="0 0 24 24" fill="none" stroke="#000" stroke-width="1.700" stroke-linecap="round"><circle cx="12" cy="12" r="9.300"/><path d="M12 11v6"/><circle cx="12" cy="7.300" r=".6" fill="#000" stroke-width="1.200"/></svg>
  </div>
  <div class="ctl" style="left:1490px;top:866px;width:308px;height:47px">
    <div class="abs" style="left:10.600px;top:13px;line-height:20px">Jump to Region:</div>
    <div class="abs" style="left:143.300px;top:12px;width:154.200px;height:23px;border:1px solid #555;border-radius:2px;background:#fff;font-size:16px;line-height:21px;padding-left:5px">US Mainland
      <svg style="left:136px;top:6.500px" width="12" height="8" viewBox="0 0 12 8" fill="none" stroke="#000" stroke-width="2"><path d="M1.500 1.500l4.500 4.500 4.500-4.500"/></svg>
    </div>
  </div>

  <!-- page scrollbar -->
  <div id="psb">
    <div class="abs" style="left:4px;top:24px;width:10px;height:752.500px;border-radius:5px;background:#8b8b8b"></div>
    <svg style="left:0;top:0" width="15" height="916" viewBox="0 0 15 916"><path d="M9 5.800l4.600 7a.8.800 0 0 1-.7 1.200H4.100a.8.800 0 0 1-.7-1.200l4.600-7a.6.600 0 0 1 1 0z" fill="#8b8b8b"/><path d="M9 908.500l4.600-7a.8.800 0 0 0-.7-1.200H4.100a.8.800 0 0 0-.7 1.200l4.600 7a.6.600 0 0 0 1 0z" fill="#8b8b8b"/></svg>
  </div>
</div>

<div id="overlay"></div>

<div id="panel">
  <div id="phead"></div>
  <svg style="left:355.700px;top:17px" width="16" height="16" viewBox="0 0 16 16" fill="none" stroke="#626c7b" stroke-width="2" stroke-linecap="round"><path d="M.8.800l14.400 14.400M15.200.8L.8 15.200"/></svg>

  <div class="box" style="top:40px;height:46.700px"><span style="top:13.700px;letter-spacing:.6px">2023</span></div>
  <svg class="chev" style="left:320.700px;top:58.800px" width="17" height="10" viewBox="0 0 17 10" fill="none" stroke="#626c7b" stroke-width="2.150" stroke-linecap="round" stroke-linejoin="round"><path d="M1 1l7.500 7.500L16 1"/></svg>
  <div class="abs" style="left:3px;top:0;width:391px;height:54.700px;background:#ebebeb"></div>
  <svg style="left:355.700px;top:17px" width="16" height="16" viewBox="0 0 16 16" fill="none" stroke="#626c7b" stroke-width="2" stroke-linecap="round"><path d="M.8.800l14.400 14.400M15.200.8L.8 15.200"/></svg>

  <div class="lbl" style="top:113.500px;letter-spacing:.3px">Facility Type</div>
  <div class="box" style="top:139.200px;height:44.600px"><span style="top:11px">All</span></div>
  <div class="ibtn" style="top:139.200px;height:44.600px"></div>
  <svg style="left:265px;top:157px" width="18" height="10" viewBox="0 0 18 10" fill="none" stroke="#626c7b" stroke-width="2.150" stroke-linecap="round" stroke-linejoin="round"><path d="M1 1l8 8 8-8"/></svg>
  <svg style="left:315.500px;top:150px" width="24" height="24" viewBox="0 0 24 24" fill="none" stroke="#fff" stroke-width="2" stroke-linecap="round"><circle cx="11.600" cy="12.200" r="9.400" stroke-width="2.200"/><path d="M11.600 11.200v6" stroke-width="2.500" stroke-linecap="butt"/><circle cx="11.600" cy="7.600" r=".8" fill="#fff" stroke-width="1.300"/></svg>

  <div class="lbl" style="top:210.500px;letter-spacing:.3px">State</div>
  <div class="box" style="top:237px;height:45.500px"><span style="top:12.500px;letter-spacing:.55px">Alabama</span></div>
  <svg style="left:271px;top:252.500px" width="16" height="15" viewBox="0 0 16 15" fill="none" stroke="#5b6574" stroke-width="2.100" stroke-linecap="round"><path d="M1 1l14 13M15 1L1 14"/></svg>
  <svg style="left:320.700px;top:255.500px" width="17" height="10" viewBox="0 0 17 10" fill="none" stroke="#626c7b" stroke-width="2.150" stroke-linecap="round" stroke-linejoin="round"><path d="M1 1l7.500 7.500L16 1"/></svg>

  <div class="lbl" style="top:290px;letter-spacing:.23px">County</div>
  <div class="box" style="top:315px;height:46px"><span style="top:13px;letter-spacing:.44px;color:#6b7280">Choose County</span></div>
  <svg style="left:320.700px;top:333.500px" width="17" height="10" viewBox="0 0 17 10" fill="none" stroke="#626c7b" stroke-width="2.150" stroke-linecap="round" stroke-linejoin="round"><path d="M1 1l7.500 7.500L16 1"/></svg>

  <div class="lbl" style="top:387.500px;letter-spacing:.02px">Emissions by Fuel Type</div>
  <div class="box" style="top:414.200px;height:44.600px"><span style="top:11.500px;letter-spacing:.4px;color:#6b7280">Select Emissions Type</span></div>
  <div class="ibtn" style="top:414.200px;height:44.600px"></div>
  <svg style="left:265px;top:431px" width="18" height="10" viewBox="0 0 18 10" fill="none" stroke="#626c7b" stroke-width="2.150" stroke-linecap="round" stroke-linejoin="round"><path d="M1 1l8 8 8-8"/></svg>
  <svg style="left:315.500px;top:424.500px" width="24" height="24" viewBox="0 0 24 24" fill="none" stroke="#fff" stroke-width="2" stroke-linecap="round"><circle cx="11.600" cy="12.200" r="9.400" stroke-width="2.200"/><path d="M11.600 11.200v6" stroke-width="2.500" stroke-linecap="butt"/><circle cx="11.600" cy="7.600" r=".8" fill="#fff" stroke-width="1.300"/></svg>

  <div class="lbl" style="top:485.500px;letter-spacing:.14px">Greenhouse Gases</div>
  <div class="box" style="top:511px;height:61px">
    <div class="abs" style="left:9.800px;top:12.200px;width:193.800px;height:34.500px;border-radius:17.300px;background:#e5e7eb"></div>
    <span style="left:25.300px;top:20.500px;letter-spacing:.37px">Carbon Dioxide (CO₂)</span>
    <span style="left:214.500px;top:21px;letter-spacing:.5px">...</span>
  </div>
  <svg style="left:310px;top:537px" width="18" height="10" viewBox="0 0 18 10" fill="none" stroke="#626c7b" stroke-width="2.150" stroke-linecap="round" stroke-linejoin="round"><path d="M1 1l8 8 8-8"/></svg>

  <div class="lbl" style="top:598.500px;letter-spacing:.15px">Facility Emissions Range (MT CO2e)</div>
  <div class="abs" style="left:31px;top:636.500px;width:306px;height:6.300px;background:#3b82f6"></div>
  <div class="abs" style="left:20px;top:628.300px;width:22.500px;height:22.500px;border:2px solid #3b82f6;border-radius:50%;background:#fff"></div>
  <div class="abs" style="left:326.200px;top:628.300px;width:22.500px;height:22.500px;border:2px solid #3b82f6;border-radius:50%;background:#fff"></div>
  <div class="box" style="left:50.200px;top:661.200px;width:124.300px;height:38.300px"><span style="top:9px;letter-spacing:.78px">-20,000</span></div>
  <div class="box" style="left:195.200px;top:661.200px;width:124.300px;height:38.300px"><span style="top:9px;letter-spacing:.64px">23,000,000</span></div>

  <div class="lbl" style="top:726.500px;letter-spacing:.14px">Reporting Status</div>
  <div class="box" style="top:752px;height:46px"><span style="top:12.500px">All</span></div>
  <svg style="left:320.700px;top:770.500px" width="17" height="10" viewBox="0 0 17 10" fill="none" stroke="#626c7b" stroke-width="2.150" stroke-linecap="round" stroke-linejoin="round"><path d="M1 1l7.500 7.500L16 1"/></svg>

  <div class="abs" style="left:19.200px;top:823px;width:330.600px;height:1px;background:#e5e7eb"></div>

  <div class="abs" style="left:19px;top:848px;width:136px;height:44.800px;border-radius:7px;background:#3b82f6;color:#fff;font-weight:400;-webkit-text-stroke:.5px #fff;font-size:16px;line-height:46.500px;text-align:center;letter-spacing:.5px">Apply Search</div>
  <div class="abs" style="left:175px;top:847.900px;width:45px;height:45px;border-radius:50%;background:#89b4fa"></div>
  <svg style="left:185.500px;top:858.400px" width="24" height="24" viewBox="0 0 24 24" fill="none" stroke="#fff" stroke-width="2" stroke-linecap="round" stroke-linejoin="round"><path d="M19.300 13.200a7.500 7.500 0 1 1-7.300-7.500h4"/><path d="M12.300 1.800l4 3.900-4.300 4"/></svg>
  <div class="abs" style="left:240px;top:847.900px;width:45px;height:45px;border-radius:50%;background:#3b82f6"></div>
  <svg style="left:250.500px;top:858.400px" width="24" height="24" viewBox="0 0 24 24" fill="none" stroke="#fff" stroke-width="2" stroke-linecap="round" stroke-linejoin="round"><path d="M5.500 18.500c-2.300-.3-4-2.300-4-4.700 0-2 1.200-3.700 2.900-4.400-.1-3 2.300-5.400 5.200-5.400 2.300 0 4.300 1.500 5 3.600.4-.1.800-.2 1.300-.2 3.100 0 5.600 2.500 5.600 5.600 0 2.800-2 5.100-4.700 5.500"/><path d="M11.900 11v8.500M8.300 16.200l3.600 3.500 3.600-3.500"/></svg>

  <!-- panel scrollbar -->
  <div class="abs" style="left:375px;top:54.700px;width:19px;height:861.300px;background:#fcfcfc"></div>
  <div class="abs" style="left:379px;top:142px;width:11px;height:746.800px;border-radius:5.500px;background:#8b8b8b"></div>
  <svg style="left:375px;top:0" width="19" height="916" viewBox="375 0 19 916"><path d="M385.200 65.600l5.300 7.600a.9.900 0 0 1-.7 1.400h-10.600a.9.900 0 0 1-.7-1.400l5.300-7.600a.8.800 0 0 1 1.400 0z" fill="#8b8b8b"/><path d="M385.200 908.200l5.300-7.600a.9.900 0 0 0-.7-1.400h-10.600a.9.900 0 0 0-.7 1.400l5.300 7.600a.8.800 0 0 0 1.400 0z" fill="#8b8b8b"/></svg>
</div>

<!-- highlight annotation -->
<div class="abs" style="left:1px;top:840.200px;width:162px;height:60.600px;border:4px solid #e2181b"></div>
</body>
</html>
